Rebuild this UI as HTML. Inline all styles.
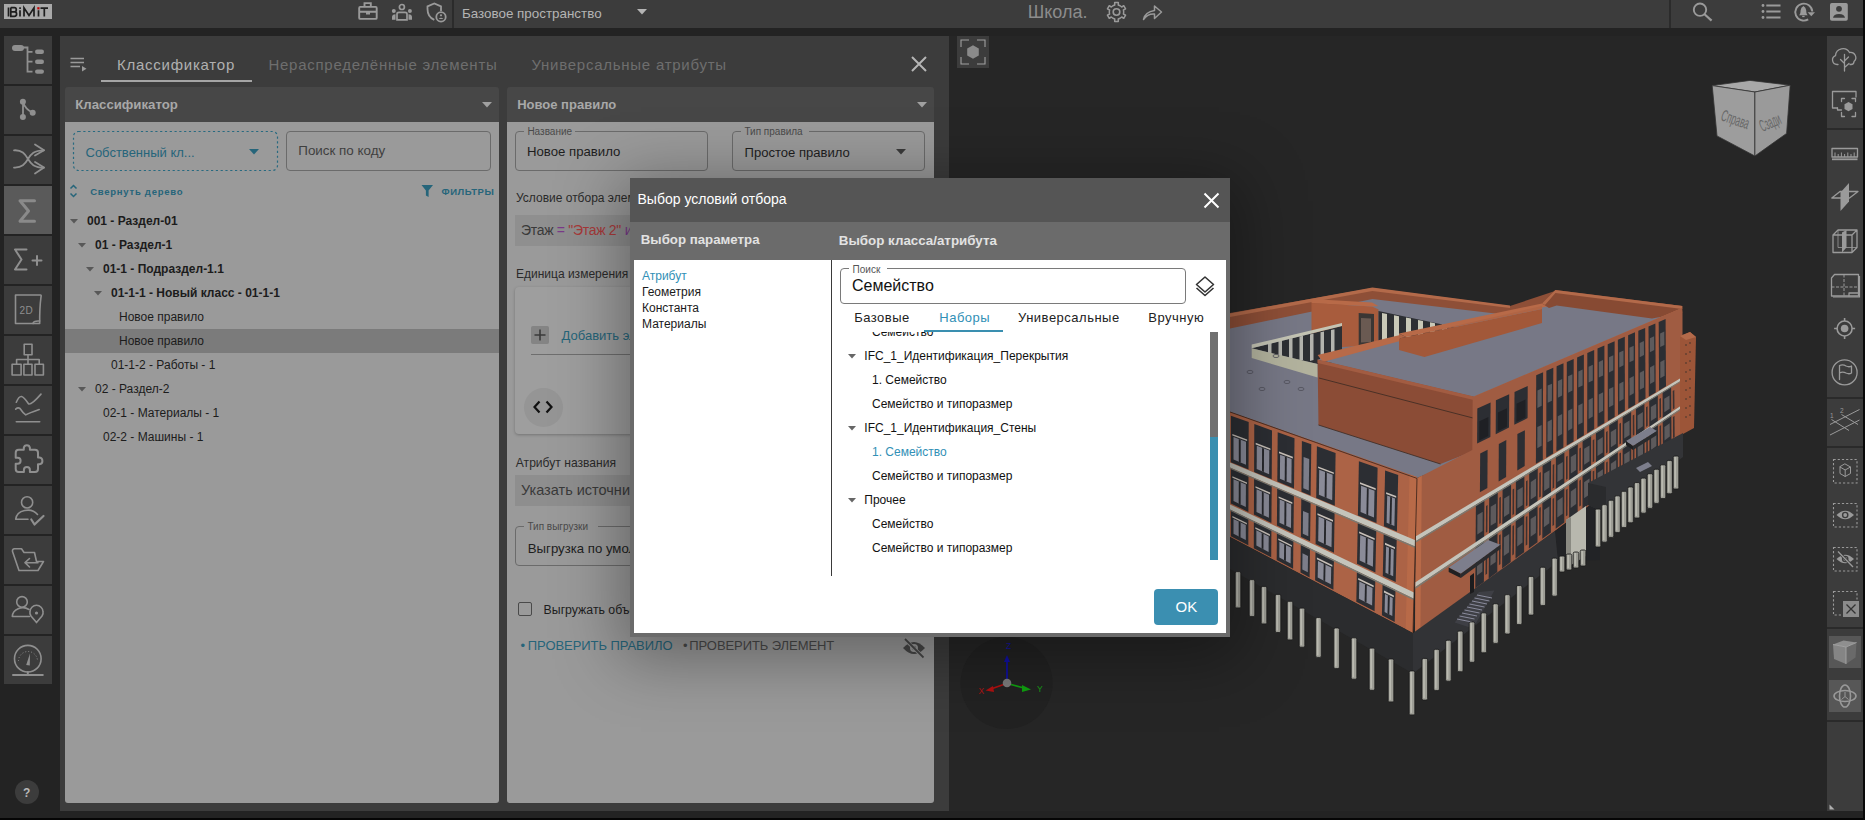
<!DOCTYPE html>
<html><head><meta charset="utf-8"><style>
html,body{margin:0;padding:0;width:1865px;height:820px;overflow:hidden;background:#232323;font-family:"Liberation Sans", sans-serif;}
.t{position:absolute;white-space:nowrap;line-height:1;font-family:"Liberation Sans", sans-serif;}
</style></head><body>
<div style="position:absolute;left:0px;top:0px;width:1865px;height:28px;background:#3c3c3c;"></div><div style="position:absolute;left:452px;top:0px;width:2px;height:28px;background:#2b2b2b;"></div><div style="position:absolute;left:1669px;top:0px;width:2px;height:28px;background:#2b2b2b;"></div><svg style="position:absolute;left:4px;top:4px;" width="48" height="15" viewBox="0 0 48 15"><rect width="48" height="15" fill="#a9a9a9"/><path d="M4.5 3.6V12.4M6.8 3.6H10.5Q12.3 3.6 12.3 5.7Q12.3 7.8 10.3 7.9H7.5H10.6Q12.6 8 12.6 10.1Q12.6 12.4 10.4 12.4H6.8V3.6" stroke="#1e1e1e" stroke-width="1.7" fill="none"/><path d="M16 6.2V12.4M20 12.4V3.8L25 11.5L30 3.8V12.4M34.5 6.2V12.4M36.5 4.2H44M40.3 4.2V12.4" stroke="#1e1e1e" stroke-width="1.7" fill="none"/><rect x="15.2" y="3.3" width="1.7" height="1.7" fill="#1e1e1e"/><rect x="33.3" y="3.2" width="2.2" height="2.2" fill="#c00000"/></svg><svg style="position:absolute;left:356px;top:0px;" width="24" height="24" viewBox="0 0 24 24"><rect x="3.2" y="6.9" width="17.5" height="12" rx="1" stroke="#9a9a9a" stroke-width="1.9" fill="none"/><path d="M8.5 6.9V3.1H14.8V6.9M3.2 11.7H20.7" stroke="#9a9a9a" stroke-width="1.9" fill="none"/><rect x="10" y="11" width="4" height="3.5" fill="#9a9a9a"/></svg><svg style="position:absolute;left:390px;top:0px;" width="24" height="24" viewBox="0 0 24 24"><circle cx="11.9" cy="7" r="2.5" stroke="#9a9a9a" stroke-width="1.7" fill="none"/><circle cx="3.8" cy="11" r="2" fill="#9a9a9a"/><circle cx="19.9" cy="11" r="2" fill="#9a9a9a"/><path d="M7 19.8V14Q7 12.4 9 12.4H15Q17 12.4 17 14V19.8Z" stroke="#9a9a9a" stroke-width="1.7" fill="none"/><path d="M2 19.8V17Q2 14.5 5.5 14.2V19.8Z M22 19.8V17Q22 14.5 18.5 14.2V19.8Z" fill="#9a9a9a"/></svg><svg style="position:absolute;left:425px;top:0px;" width="24" height="24" viewBox="0 0 24 24"><path d="M9.3 19.9Q2.5 17 2.5 9V6.4L9.3 3.4L16 6.4V11" stroke="#9a9a9a" stroke-width="1.8" fill="none"/><circle cx="16" cy="16.9" r="4.7" stroke="#9a9a9a" stroke-width="1.8" fill="none"/><circle cx="16" cy="15.3" r="1.1" fill="#9a9a9a"/><path d="M13.6 19Q16 16.4 18.4 19Z" fill="#9a9a9a"/></svg><div class="t" style="left:462px;top:6.86px;font-size:13.4px;color:#b4b4b4;font-weight:400;letter-spacing:0px;">Базовое пространство</div><svg style="position:absolute;left:637px;top:9px;" width="10" height="6.5" viewBox="0 0 10 6.5"><path d="M0 0H10L5.0 5.5Z" fill="#b4b4b4"/></svg><div class="t" style="left:1027.7px;top:2.96px;font-size:18px;color:#8c8c8c;font-weight:400;letter-spacing:0px;">Школа.</div><svg style="position:absolute;left:1104px;top:0px;" width="26" height="24" viewBox="0 0 26 24"><path d="M8.91 5.76L10.76 5.01L10.67 2.58L14.33 2.58L14.24 5.01L16.11 5.77L17.68 7.00L19.75 5.70L21.58 8.87L19.42 10.02L19.70 12.01L19.42 13.98L21.58 15.13L19.75 18.30L17.68 17.00L16.09 18.24L14.24 18.99L14.33 21.42L10.67 21.42L10.76 18.99L8.89 18.23L7.32 17.00L5.25 18.30L3.42 15.13L5.58 13.98L5.30 11.99L5.58 10.02L3.42 8.87L5.25 5.70L7.32 7.00Z" stroke="#9a9a9a" stroke-width="1.5" fill="none" stroke-linejoin="round"/><circle cx="12.5" cy="12" r="3.3" stroke="#9a9a9a" stroke-width="1.6" fill="none"/></svg><svg style="position:absolute;left:1140px;top:0px;" width="24" height="24" viewBox="0 0 24 24"><path d="M3.5 19.5Q5 12 14.5 10.5V6L21.5 12L14.5 18.5V14Q7.5 13.5 3.5 19.5Z" stroke="#9a9a9a" stroke-width="1.5" fill="none" stroke-linejoin="round"/></svg><svg style="position:absolute;left:1690px;top:0px;" width="26" height="24" viewBox="0 0 26 24"><circle cx="10" cy="9.7" r="6.2" stroke="#9a9a9a" stroke-width="1.9" fill="none"/><path d="M14.5 14.2L21.6 20.6" stroke="#9a9a9a" stroke-width="2.2"/></svg><svg style="position:absolute;left:1760px;top:0px;" width="24" height="24" viewBox="0 0 24 24"><circle cx="3" cy="5.5" r="1.4" fill="#9a9a9a"/><circle cx="3" cy="11.5" r="1.4" fill="#9a9a9a"/><circle cx="3" cy="17.5" r="1.4" fill="#9a9a9a"/><path d="M6.3 5.5H20.5M6.3 11.5H20.5M6.3 17.5H20.5" stroke="#9a9a9a" stroke-width="2"/></svg><svg style="position:absolute;left:1793px;top:0px;" width="24" height="24" viewBox="0 0 24 24"><path d="M19.3 11.5A8.5 8.5 0 1 0 15.2 19.4" stroke="#9a9a9a" stroke-width="1.9" fill="none"/><path d="M14.6 12.3H22L18.3 16.3Z" fill="#9a9a9a"/><path d="M6 15.2Q7.6 14.2 7.6 10.2Q7.9 7.2 10.4 6Q12.9 7.2 13.2 10.2Q13.2 14.2 14.8 15.2Z" fill="#9a9a9a"/><rect x="9.2" y="15.8" width="2.4" height="1.3" fill="#9a9a9a"/></svg><svg style="position:absolute;left:1829px;top:2px;" width="20" height="20" viewBox="0 0 20 20"><rect x="1" y="1" width="17.8" height="17.8" rx="1.8" fill="#9a9a9a"/><circle cx="10" cy="6.8" r="2.9" fill="#3c3c3c"/><path d="M4 15.8Q4.5 12 10 11.9Q15.5 12 16 15.8Z" fill="#3c3c3c"/></svg><div style="position:absolute;left:4px;top:36px;width:48px;height:48px;background:#3c3c3c;"></div><svg style="position:absolute;left:4px;top:36px;" width="48" height="48" viewBox="0 0 48 48"><rect x="8" y="9" width="12" height="6" rx="3" fill="#8f8f8f"/><path d="M19 11.5H23.5V36.5M23.5 15.8H28.5M23.5 25.7H28.5M23.5 35.6H28.5" stroke="#8f8f8f" stroke-width="1.8" fill="none"/><rect x="31" y="13.6" width="9" height="4.4" rx="2.2" fill="#8f8f8f"/><rect x="31" y="23.5" width="9" height="4.4" rx="2.2" fill="#8f8f8f"/><rect x="31" y="33.4" width="9" height="4.4" rx="2.2" fill="#8f8f8f"/></svg><div style="position:absolute;left:4px;top:86px;width:48px;height:48px;background:#3c3c3c;"></div><svg style="position:absolute;left:4px;top:86px;" width="48" height="48" viewBox="0 0 48 48"><path d="M19 15.7V31M19 15.7Q21 23 28.7 26.7" stroke="#8f8f8f" fill="none" stroke-linecap="round" stroke-linejoin="round" stroke-width="1.8"/><circle cx="18.9" cy="15.7" r="3" fill="#8f8f8f"/><circle cx="18.9" cy="31" r="3" fill="#8f8f8f"/><circle cx="28.7" cy="26.7" r="3" fill="#8f8f8f"/></svg><div style="position:absolute;left:4px;top:136px;width:48px;height:48px;background:#3c3c3c;"></div><svg style="position:absolute;left:4px;top:136px;" width="48" height="48" viewBox="0 0 48 48"><path d="M10 14.3C18 13.8 21 18 24 23C27 28 30 31.6 40 31.6M10 31.6C18 32 21 28 24 23C27 18 30 14.3 40 14.3" stroke="#8f8f8f" fill="none" stroke-linecap="round" stroke-linejoin="round" stroke-width="1.8"/><path d="M31 8.5L40 14.3L31 19.5M31 26L40 31.6L31 37.5" stroke="#8f8f8f" fill="none" stroke-linecap="round" stroke-linejoin="round" stroke-width="1.8"/></svg><div style="position:absolute;left:4px;top:186px;width:48px;height:48px;background:#5a5a5a;"></div><svg style="position:absolute;left:4px;top:186px;" width="48" height="48" viewBox="0 0 48 48"><path d="M16 14.8H30.5M16 14.8L24.5 25L16 35.3H30.5" stroke="#8a8a8a" fill="none" stroke-linecap="round" stroke-linejoin="round" stroke-width="3"/></svg><div style="position:absolute;left:4px;top:236px;width:48px;height:48px;background:#3c3c3c;"></div><svg style="position:absolute;left:4px;top:236px;" width="48" height="48" viewBox="0 0 48 48"><path d="M11 13.5H22.5M11 13.5L17.5 23.5L11 33.5H22.5M28.5 24.5H37.5M33 20V29" stroke="#8f8f8f" fill="none" stroke-linecap="round" stroke-linejoin="round" stroke-width="2"/></svg><div style="position:absolute;left:4px;top:286px;width:48px;height:48px;background:#3c3c3c;"></div><svg style="position:absolute;left:4px;top:286px;" width="48" height="48" viewBox="0 0 48 48"><path d="M11.5 9H36.5Q37.5 9 37 11Q35.5 22 35.7 37.5H11.5Z" stroke="#8f8f8f" fill="none" stroke-linecap="round" stroke-linejoin="round" stroke-width="1.6"/><path d="M29 37.5Q29.5 34.5 35.7 35" stroke="#8f8f8f" fill="none" stroke-linecap="round" stroke-linejoin="round" stroke-width="1.6"/><text x="15.5" y="27.5" font-family="Liberation Sans" font-size="10" fill="#8f8f8f" letter-spacing="0.5">2D</text></svg><div style="position:absolute;left:4px;top:336px;width:48px;height:48px;background:#3c3c3c;"></div><svg style="position:absolute;left:4px;top:336px;" width="48" height="48" viewBox="0 0 48 48"><rect x="20.2" y="8.3" width="7.8" height="10.5" stroke="#8f8f8f" fill="none" stroke-linecap="round" stroke-linejoin="round" stroke-width="1.6"/><path d="M24 18.8V23.5M12.6 28.2V23.5H35.2V28.2M24 23.5V28.2" stroke="#8f8f8f" fill="none" stroke-linecap="round" stroke-linejoin="round" stroke-width="1.6"/><rect x="8.1" y="28.2" width="9" height="10.8" stroke="#8f8f8f" fill="none" stroke-linecap="round" stroke-linejoin="round" stroke-width="1.6"/><rect x="19.9" y="28.2" width="8.1" height="10.8" stroke="#8f8f8f" fill="none" stroke-linecap="round" stroke-linejoin="round" stroke-width="1.6"/><rect x="31" y="28.2" width="8.4" height="10.8" stroke="#8f8f8f" fill="none" stroke-linecap="round" stroke-linejoin="round" stroke-width="1.6"/></svg><div style="position:absolute;left:4px;top:386px;width:48px;height:48px;background:#3c3c3c;"></div><svg style="position:absolute;left:4px;top:386px;" width="48" height="48" viewBox="0 0 48 48"><path d="M12.3 16.2Q15 10 17.5 10.5Q20 11 24.5 17.8Q27 19.5 37 8.1" stroke="#8f8f8f" fill="none" stroke-linecap="round" stroke-linejoin="round" stroke-width="1.6"/><path d="M11.7 23.1Q14 21 16 22.5Q19 27 21.7 28.9Q25 27 35.2 23.5" stroke="#8f8f8f" fill="none" stroke-linecap="round" stroke-linejoin="round" stroke-width="1.6"/><path d="M12.3 35.7H35.7" stroke="#8f8f8f" fill="none" stroke-linecap="round" stroke-linejoin="round" stroke-width="1.6"/></svg><div style="position:absolute;left:4px;top:436px;width:48px;height:48px;background:#3c3c3c;"></div><svg style="position:absolute;left:4px;top:436px;" width="48" height="48" viewBox="0 0 48 48"><path d="M14.7 13.8H19.8V11.7A3.1 3.1 0 0 1 25.9 11.7V13.8H31A3 3 0 0 1 34 16.8V21.6H35.6A3.4 3.4 0 0 1 35.6 28.3H34V33A3 3 0 0 1 31 36H25.9V34A3 3 0 0 0 19.9 34V36H14.7A3 3 0 0 1 11.7 33V27.8H13.6A3 3 0 0 0 13.6 21.8H11.7V16.8A3 3 0 0 1 14.7 13.8Z" stroke="#8f8f8f" fill="none" stroke-linecap="round" stroke-linejoin="round" stroke-width="2"/></svg><div style="position:absolute;left:4px;top:486px;width:48px;height:48px;background:#3c3c3c;"></div><svg style="position:absolute;left:4px;top:486px;" width="48" height="48" viewBox="0 0 48 48"><circle cx="23.1" cy="16.4" r="5.6" stroke="#8f8f8f" fill="none" stroke-linecap="round" stroke-linejoin="round" stroke-width="1.6"/><path d="M11.7 33.2A12 10 0 0 1 33.5 28.5M11.7 33.2H24" stroke="#8f8f8f" fill="none" stroke-linecap="round" stroke-linejoin="round" stroke-width="1.6"/><path d="M27.3 33.5L30.5 38.5L39.5 30" stroke="#8f8f8f" fill="none" stroke-linecap="round" stroke-linejoin="round" stroke-width="2.2"/></svg><div style="position:absolute;left:4px;top:536px;width:48px;height:48px;background:#3c3c3c;"></div><svg style="position:absolute;left:4px;top:536px;" width="48" height="48" viewBox="0 0 48 48"><path d="M15 34.5L8.5 15.5Q8.2 12.8 10.5 12.8H17.5L20 16.5H30.5L32.5 25.5H39.5L34 34.5Z" stroke="#8f8f8f" fill="none" stroke-linecap="round" stroke-linejoin="round" stroke-width="1.6"/><path d="M34 26.7H21.5M25.5 22.5L21 26.7L25.5 31" stroke="#8f8f8f" fill="none" stroke-linecap="round" stroke-linejoin="round" stroke-width="1.6"/></svg><div style="position:absolute;left:4px;top:586px;width:48px;height:48px;background:#3c3c3c;"></div><svg style="position:absolute;left:4px;top:586px;" width="48" height="48" viewBox="0 0 48 48"><circle cx="18" cy="15.9" r="5.3" stroke="#8f8f8f" fill="none" stroke-linecap="round" stroke-linejoin="round" stroke-width="1.6"/><path d="M8.3 30.5A10.5 9 0 0 1 25 23.5M8.3 30.5H25.5" stroke="#8f8f8f" fill="none" stroke-linecap="round" stroke-linejoin="round" stroke-width="1.6"/><path d="M32.5 36.6L27 30Q25.5 27.5 26 25.8A6.5 6.5 0 0 1 39 25.8Q39.5 27.5 38 30Z" stroke="#8f8f8f" fill="none" stroke-linecap="round" stroke-linejoin="round" stroke-width="1.6"/><circle cx="32.5" cy="27" r="1.6" fill="#8f8f8f"/></svg><div style="position:absolute;left:4px;top:636px;width:48px;height:48px;background:#3c3c3c;"></div><svg style="position:absolute;left:4px;top:636px;" width="48" height="48" viewBox="0 0 48 48"><circle cx="23.8" cy="22.7" r="13.3" stroke="#8f8f8f" fill="none" stroke-linecap="round" stroke-linejoin="round" stroke-width="1.6"/><path d="M14.5 25A9.5 9.5 0 0 1 33.5 25" stroke="#8f8f8f" stroke-width="1" stroke-dasharray="1 2" fill="none"/><path d="M22.2 29L26 17.5L25.8 29.5Z" fill="#8f8f8f"/><path d="M23.8 36V39M9 39H38.8" stroke="#8f8f8f" fill="none" stroke-linecap="round" stroke-linejoin="round" stroke-width="2"/></svg><div style="position:absolute;left:15px;top:780px;width:24px;height:24px;border-radius:50%;background:#3c3c3c"></div><div class="t" style="left:23px;top:786.84px;font-size:12px;color:#b8b8b8;font-weight:700;letter-spacing:0px;">?</div><div style="position:absolute;left:60px;top:36px;width:889px;height:775px;background:#3c3c3c;"></div><svg style="position:absolute;left:68px;top:54px;" width="22" height="20" viewBox="0 0 22 20"><path d="M2.5 4.5H16M2.5 8.5H16M2.5 12.5H12" stroke="#9a9a9a" stroke-width="1.7"/><path d="M14 12L18.5 14.8L14 17.6Z" fill="#9a9a9a"/></svg><div class="t" style="left:117px;top:57.10px;font-size:15px;color:#b0b0b0;font-weight:400;letter-spacing:0.75px;">Классификатор</div><div class="t" style="left:268.4px;top:57.10px;font-size:15px;color:#6e6e6e;font-weight:400;letter-spacing:0.75px;">Нераспределённые элементы</div><div class="t" style="left:531.4px;top:57.10px;font-size:15px;color:#6e6e6e;font-weight:400;letter-spacing:0.75px;">Универсальные атрибуты</div><div style="position:absolute;left:101px;top:80px;width:151px;height:2px;background:#a5a5a5;"></div><svg style="position:absolute;left:909px;top:54px;" width="20" height="20" viewBox="0 0 20 20"><path d="M3 3L17 17M17 3L3 17" stroke="#b5b5b5" stroke-width="2"/></svg><div style="position:absolute;left:65px;top:87px;width:434px;height:35px;background:#474747;border-radius:3px 3px 0 0"></div><div style="position:absolute;left:65px;top:122px;width:434px;height:681px;background:#9a9a9a;border-radius:0 0 3px 3px"></div><div class="t" style="left:75.3px;top:98.33px;font-size:13.2px;color:#a8a8a8;font-weight:700;letter-spacing:0px;">Классификатор</div><svg style="position:absolute;left:482px;top:101.5px;" width="10" height="6.5" viewBox="0 0 10 6.5"><path d="M0 0H10L5.0 5.5Z" fill="#a0a0a0"/></svg><svg style="position:absolute;left:72px;top:130px;" width="207" height="42" viewBox="0 0 207 42"><rect x="1.5" y="1.5" width="204" height="39" rx="5" stroke="#286a80" stroke-width="1.2" stroke-dasharray="2.2 2.6" fill="none"/></svg><div class="t" style="left:85.5px;top:146.30px;font-size:13px;color:#26657a;font-weight:400;letter-spacing:0px;">Собственный кл...</div><svg style="position:absolute;left:249px;top:148.5px;" width="10" height="6.5" viewBox="0 0 10 6.5"><path d="M0 0H10L5.0 5.5Z" fill="#26657a"/></svg><div style="position:absolute;left:286px;top:131px;width:203px;height:38px;border:1px solid #6b6b6b;border-radius:4px"></div><div class="t" style="left:298.3px;top:143.66px;font-size:13.4px;color:#3f3f3f;font-weight:400;letter-spacing:0px;">Поиск по коду</div><svg style="position:absolute;left:67px;top:183px;" width="12" height="16" viewBox="0 0 12 16"><path d="M3.5 5.5L6.5 2.5L9.5 5.5M3.5 10.5L6.5 13.5L9.5 10.5" stroke="#26657a" stroke-width="1.5" fill="none"/></svg><div class="t" style="left:90.2px;top:187.26px;font-size:9.5px;color:#26657a;font-weight:700;letter-spacing:0.75px;">Свернуть дерево</div><svg style="position:absolute;left:421px;top:184px;" width="13" height="14" viewBox="0 0 13 14"><path d="M0.5 1H12L7.6 6.5V13L4.9 11.5V6.5Z" fill="#26657a"/></svg><div class="t" style="left:441.5px;top:187.26px;font-size:9.5px;color:#26657a;font-weight:700;letter-spacing:0.55px;">ФИЛЬТРЫ</div><div style="position:absolute;left:65px;top:329px;width:434px;height:24px;background:#7b7b7b;"></div><div class="t" style="left:87px;top:215.24px;font-size:12px;color:#1c1c1c;font-weight:700;letter-spacing:0px;">001 - Раздел-01</div><svg style="position:absolute;left:69.5px;top:218.9px;" width="8" height="5.5" viewBox="0 0 8 5.5"><path d="M0 0H8L4.0 4.5Z" fill="#585858"/></svg><div class="t" style="left:95px;top:239.24px;font-size:12px;color:#1c1c1c;font-weight:700;letter-spacing:0px;">01 - Раздел-1</div><svg style="position:absolute;left:77.5px;top:242.9px;" width="8" height="5.5" viewBox="0 0 8 5.5"><path d="M0 0H8L4.0 4.5Z" fill="#585858"/></svg><div class="t" style="left:103px;top:263.24px;font-size:12px;color:#1c1c1c;font-weight:700;letter-spacing:0px;">01-1 - Подраздел-1.1</div><svg style="position:absolute;left:85.5px;top:266.9px;" width="8" height="5.5" viewBox="0 0 8 5.5"><path d="M0 0H8L4.0 4.5Z" fill="#585858"/></svg><div class="t" style="left:111px;top:287.24px;font-size:12px;color:#1c1c1c;font-weight:700;letter-spacing:0px;">01-1-1 - Новый класс - 01-1-1</div><svg style="position:absolute;left:93.5px;top:290.9px;" width="8" height="5.5" viewBox="0 0 8 5.5"><path d="M0 0H8L4.0 4.5Z" fill="#585858"/></svg><div class="t" style="left:119px;top:311.24px;font-size:12px;color:#1c1c1c;font-weight:400;letter-spacing:0px;">Новое правило</div><div class="t" style="left:119px;top:335.24px;font-size:12px;color:#1c1c1c;font-weight:400;letter-spacing:0px;">Новое правило</div><div class="t" style="left:111px;top:359.24px;font-size:12px;color:#1c1c1c;font-weight:400;letter-spacing:0px;">01-1-2 - Работы - 1</div><div class="t" style="left:95px;top:383.24px;font-size:12px;color:#1c1c1c;font-weight:400;letter-spacing:0px;">02 - Раздел-2</div><svg style="position:absolute;left:77.5px;top:386.9px;" width="8" height="5.5" viewBox="0 0 8 5.5"><path d="M0 0H8L4.0 4.5Z" fill="#585858"/></svg><div class="t" style="left:103px;top:407.24px;font-size:12px;color:#1c1c1c;font-weight:400;letter-spacing:0px;">02-1 - Материалы - 1</div><div class="t" style="left:103px;top:431.24px;font-size:12px;color:#1c1c1c;font-weight:400;letter-spacing:0px;">02-2 - Машины - 1</div><div style="position:absolute;left:507px;top:87px;width:427px;height:35px;background:#474747;border-radius:3px 3px 0 0"></div><div style="position:absolute;left:507px;top:122px;width:427px;height:681px;background:#9a9a9a;border-radius:0 0 3px 3px"></div><div class="t" style="left:517.2px;top:98.30px;font-size:13px;color:#a8a8a8;font-weight:700;letter-spacing:0px;">Новое правило</div><svg style="position:absolute;left:917px;top:102px;" width="10" height="6.5" viewBox="0 0 10 6.5"><path d="M0 0H10L5.0 5.5Z" fill="#a0a0a0"/></svg><div style="position:absolute;left:515px;top:131px;width:191px;height:38px;border:1px solid #6b6b6b;border-radius:4px"></div><div style="position:absolute;left:524.4px;top:129px;width:50.8px;height:5px;background:#9a9a9a;"></div><div class="t" style="left:527.4px;top:127.04px;font-size:10px;color:#4a4a4a;font-weight:400;letter-spacing:0px;">Название</div><div class="t" style="left:527px;top:144.83px;font-size:13.2px;color:#1e1e1e;font-weight:400;letter-spacing:0px;">Новое правило</div><div style="position:absolute;left:732px;top:131px;width:191px;height:38px;border:1px solid #6b6b6b;border-radius:4px"></div><div style="position:absolute;left:741.4px;top:129px;width:67.6px;height:5px;background:#9a9a9a;"></div><div class="t" style="left:744.4px;top:127.04px;font-size:10px;color:#4a4a4a;font-weight:400;letter-spacing:0px;">Тип правила</div><div class="t" style="left:744.5px;top:146.45px;font-size:13.05px;color:#1e1e1e;font-weight:400;letter-spacing:0px;">Простое правило</div><svg style="position:absolute;left:896px;top:149px;" width="10" height="6.5" viewBox="0 0 10 6.5"><path d="M0 0H10L5.0 5.5Z" fill="#3a3a3a"/></svg><div class="t" style="left:516px;top:192.14px;font-size:12px;color:#2a2a2a;font-weight:400;letter-spacing:0px;">Условие отбора элементов</div><div style="position:absolute;left:515px;top:215px;width:410px;height:31px;background:#8f8f8f;"></div><div class="t" style="left:521px;top:223.0px;font-size:14px;letter-spacing:-0.3px;color:#3a3a3a">Этаж <span style="color:#7a3a8a">=</span> <span style="color:#a83a3a">"Этаж 2"</span> <span style="color:#7a3a8a">и</span></div><div class="t" style="left:516px;top:267.84px;font-size:12px;color:#2a2a2a;font-weight:400;letter-spacing:0px;">Единица измерения</div><div style="position:absolute;left:515px;top:287px;width:410px;height:147px;background:#9e9e9e;border-radius:4px;box-shadow:0 1px 3px rgba(0,0,0,0.25)"></div><div style="position:absolute;left:531px;top:326px;width:18px;height:18px;background:#848484;border-radius:2px"></div><svg style="position:absolute;left:531px;top:326px;" width="18" height="18" viewBox="0 0 18 18"><path d="M9 3.5V14.5M3.5 9H14.5" stroke="#3a3a3a" stroke-width="1.6"/></svg><div class="t" style="left:561.6px;top:328.50px;font-size:13px;color:#26657a;font-weight:400;letter-spacing:0px;">Добавить элемент</div><div style="position:absolute;left:531px;top:354px;width:394px;height:1px;background:#6e6e6e;"></div><div style="position:absolute;left:524px;top:388px;width:39px;height:39px;border-radius:50%;background:#959595"></div><svg style="position:absolute;left:531px;top:396px;" width="24" height="22" viewBox="0 0 24 22"><path d="M8.5 5.5L3.5 11L8.5 16.5M15.5 5.5L20.5 11L15.5 16.5" stroke="#111" stroke-width="2.2" fill="none"/></svg><div class="t" style="left:515.8px;top:456.76px;font-size:12.1px;color:#2a2a2a;font-weight:400;letter-spacing:0px;">Атрибут названия</div><div style="position:absolute;left:515px;top:475px;width:410px;height:31px;background:#8e8e8e;"></div><div class="t" style="left:521px;top:483.33px;font-size:14.5px;color:#3a3a3a;font-weight:400;letter-spacing:0px;">Указать источник</div><div style="position:absolute;left:515px;top:526px;width:408px;height:38px;border:1px solid #6b6b6b;border-radius:4px"></div><div style="position:absolute;left:524.4px;top:524px;width:73.19999999999999px;height:5px;background:#9a9a9a;"></div><div class="t" style="left:527.4px;top:522.04px;font-size:10px;color:#4a4a4a;font-weight:400;letter-spacing:0px;">Тип выгрузки</div><div class="t" style="left:527.8px;top:541.53px;font-size:13.2px;color:#1e1e1e;font-weight:400;letter-spacing:0px;">Выгрузка по умолчанию</div><div style="position:absolute;left:518px;top:602px;width:11.5px;height:11.5px;border:1.8px solid #4a4a4a;border-radius:2px"></div><div class="t" style="left:543.6px;top:603.59px;font-size:12.3px;color:#1e1e1e;font-weight:400;letter-spacing:0px;">Выгружать объекты</div><div class="t" style="left:520.5px;top:639.00px;font-size:13px;color:#26657a;font-weight:400;letter-spacing:0px;">•</div><div class="t" style="left:527.8px;top:639.20px;font-size:13px;color:#26657a;font-weight:400;letter-spacing:-0.06px;">ПРОВЕРИТЬ ПРАВИЛО</div><div class="t" style="left:683px;top:639.00px;font-size:13px;color:#4a4a4a;font-weight:400;letter-spacing:0px;">•</div><div class="t" style="left:689.3px;top:638.80px;font-size:13px;color:#4a4a4a;font-weight:400;letter-spacing:-0.08px;">ПРОВЕРИТЬ ЭЛЕМЕНТ</div><svg style="position:absolute;left:901px;top:636px;" width="26" height="24" viewBox="0 0 26 24"><path d="M2 12Q13 0 24 12Q13 24 2 12Z" fill="#474747"/><circle cx="13" cy="12" r="4" fill="#9a9a9a"/><circle cx="13" cy="12" r="2" fill="#474747"/><path d="M4 3.5L22 21" stroke="#9a9a9a" stroke-width="3.5"/><path d="M4 3L22.5 21.5" stroke="#474747" stroke-width="1.8"/></svg><div style="position:absolute;left:949px;top:36px;width:878px;height:775px;background:#262626;"></div><svg style="position:absolute;left:0;top:0" width="1865" height="820" viewBox="0 0 1865 820"><polygon points="1230.0,313.0 1372.4,288.0 1510.0,306.0 1555.0,291.0 1682.0,306.0 1682.0,320.0 1474.0,400.0 1230.0,330.0" fill="#8e4f37" /><polygon points="1230.0,328.5 1372.4,299.0 1508.0,315.0 1560.0,300.0 1682.0,314.0 1474.0,400.0 1474.0,455.0 1417.0,478.0 1230.0,412.0" fill="#777886" /><polygon points="1230.0,313.5 1372.4,287.5 1510.0,305.5 1510.0,308.0 1372.4,291.0 1230.0,317.0" fill="#b36a4a" /><polygon points="1311.5,303.0 1372.0,306.6 1378.5,309.6 1378.5,344.7 1311.5,349.0" fill="#a85c3d" /><polygon points="1311.5,299.0 1372.0,302.5 1378.5,306.0 1372.0,306.6 1311.5,303.0" fill="#b86a48" /><polygon points="1358.7,313.0 1374.0,314.0 1374.0,344.0 1358.7,345.0" fill="#3a3634" /><polygon points="1361.0,318.0 1371.0,318.5 1371.0,342.0 1361.0,342.5" fill="#6a5a52" /><polygon points="1378.5,311.0 1464.0,329.0 1464.0,345.0 1378.5,344.7" fill="#2d2f33" /><polygon points="1382.0,313.0 1387.0,314.0 1387.0,343.0 1382.0,343.0" fill="#c9c9b8" /><polygon points="1394.0,315.3 1399.0,316.3 1399.0,343.0 1394.0,343.0" fill="#c9c9b8" /><polygon points="1406.0,317.6 1411.0,318.6 1411.0,343.0 1406.0,343.0" fill="#c9c9b8" /><polygon points="1418.0,319.9 1423.0,320.9 1423.0,343.0 1418.0,343.0" fill="#c9c9b8" /><polygon points="1430.0,322.2 1435.0,323.2 1435.0,343.0 1430.0,343.0" fill="#c9c9b8" /><polygon points="1442.0,324.5 1447.0,325.5 1447.0,343.0 1442.0,343.0" fill="#c9c9b8" /><polygon points="1454.0,326.8 1459.0,327.8 1459.0,343.0 1454.0,343.0" fill="#c9c9b8" /><polygon points="1251.7,348.3 1342.0,326.0 1342.0,362.0 1317.6,364.1" fill="#2d2f33" /><polygon points="1268.0,343.2 1271.5,342.4 1271.5,360.0 1268.0,361.0" fill="#b4b4ae" /><polygon points="1278.5,341.0 1282.0,340.2 1282.0,360.0 1278.5,361.0" fill="#b4b4ae" /><polygon points="1289.0,338.8 1292.5,338.0 1292.5,360.0 1289.0,361.0" fill="#b4b4ae" /><polygon points="1299.5,336.6 1303.0,335.8 1303.0,360.0 1299.5,361.0" fill="#b4b4ae" /><polygon points="1310.0,334.4 1313.5,333.6 1313.5,360.0 1310.0,361.0" fill="#b4b4ae" /><polygon points="1320.5,332.2 1324.0,331.4 1324.0,360.0 1320.5,361.0" fill="#b4b4ae" /><polygon points="1331.0,330.0 1334.5,329.2 1334.5,360.0 1331.0,361.0" fill="#b4b4ae" /><polygon points="1251.7,344.5 1342.0,323.0 1342.0,326.0 1251.7,348.3" fill="#c4c4b4" /><polygon points="1251.7,348.3 1317.6,364.1 1317.6,377.6 1251.7,358.0" fill="#b3b39e" /><ellipse cx="1262" cy="389" rx="3" ry="1.6" fill="none" stroke="#50505a" stroke-width="0.8"/><ellipse cx="1287" cy="382" rx="3" ry="1.6" fill="none" stroke="#50505a" stroke-width="0.8"/><ellipse cx="1301" cy="389" rx="3" ry="1.6" fill="none" stroke="#50505a" stroke-width="0.8"/><ellipse cx="1322" cy="397" rx="3" ry="1.6" fill="none" stroke="#50505a" stroke-width="0.8"/><ellipse cx="1338" cy="375" rx="3" ry="1.6" fill="none" stroke="#50505a" stroke-width="0.8"/><ellipse cx="1250" cy="372" rx="3" ry="1.6" fill="none" stroke="#50505a" stroke-width="0.8"/><ellipse cx="1276" cy="356" rx="3" ry="1.6" fill="none" stroke="#50505a" stroke-width="0.8"/><polygon points="1317.6,359.5 1473.7,396.6 1473.7,455.0 1467.8,453.2 1440.5,464.0 1318.5,425.0" fill="#8b4c36" /><polyline points="1319.0,378.0 1473.0,418.0" stroke="#3a2a22" stroke-width="0.8" fill="none"/><polyline points="1318.5,425.0 1440.5,464.0" stroke="#3a2a22" stroke-width="0.8" fill="none"/><polygon points="1317.6,359.5 1400.0,339.5 1541.6,308.0 1555.0,293.0 1682.0,308.0 1473.7,396.6" fill="#777886" /><polygon points="1317.6,355.0 1400.0,335.0 1400.0,341.0 1323.0,362.0" fill="#b86a48" /><polygon points="1317.6,359.5 1473.7,396.6 1473.7,400.0 1317.6,363.0" fill="#a25c42" /><polygon points="1399.0,333.5 1542.0,303.5 1549.0,306.0 1406.0,337.0" fill="#b86a48" /><polygon points="1399.0,338.4 1542.0,309.0 1542.0,323.0 1424.4,357.0 1399.0,350.0" fill="#a25839" /><polygon points="1399.0,333.5 1406.0,337.0 1542.0,306.0 1542.0,309.0 1399.0,338.4" fill="#b06545" /><polygon points="1542.0,303.5 1555.4,290.0 1682.3,306.0 1682.3,313.0 1652.0,318.4 1556.6,305.4 1549.0,308.0" fill="#874a33" /><polygon points="1542.0,303.5 1555.4,290.0 1682.3,306.0 1682.3,309.0 1555.4,293.0 1545.0,305.0" fill="#b36a4a" /><polygon points="1474.0,396.6 1682.0,308.0 1682.0,313.0 1474.0,401.5" fill="#b86a48" /><polygon points="1230.0,411.7 1417.0,477.0 1413.0,633.0 1230.0,537.0" fill="#ac6346" /><polygon points="1230.9,415.8 1248.7,422.1 1248.5,469.6 1230.9,462.2" fill="#2c2e33" /><polygon points="1232.4,434.0 1247.1,439.6 1247.1,441.1 1232.4,435.5" fill="#c8c0b8" /><polygon points="1233.5,436.9 1246.0,441.7 1246.0,464.7 1233.5,459.5" fill="#8a8b98" /><polygon points="1238.8,439.0 1240.7,439.7 1240.7,462.5 1238.8,461.7" fill="#25262a" /><polygon points="1254.3,424.1 1272.0,430.4 1271.7,479.3 1254.1,471.9" fill="#2c2e33" /><polygon points="1255.7,442.8 1270.4,448.4 1270.4,450.0 1255.7,444.4" fill="#c8c0b8" /><polygon points="1256.8,445.8 1269.3,450.6 1269.1,474.2 1256.7,469.1" fill="#8a8b98" /><polygon points="1262.1,447.9 1264.0,448.6 1263.9,472.1 1262.0,471.3" fill="#25262a" /><polygon points="1277.7,432.3 1294.5,438.3 1294.0,488.6 1277.3,481.6" fill="#2c2e33" /><polygon points="1279.0,451.6 1292.8,456.8 1292.8,458.5 1279.0,453.2" fill="#c8c0b8" /><polygon points="1280.1,454.7 1291.6,459.1 1291.4,483.4 1279.9,478.7" fill="#8a8b98" /><polygon points="1284.9,456.6 1286.8,457.3 1286.6,481.4 1284.7,480.7" fill="#25262a" /><polygon points="1301.9,441.0 1311.3,444.3 1310.6,495.6 1301.4,491.7" fill="#2c2e33" /><polygon points="1303.6,456.9 1309.2,459.0 1308.8,490.6 1303.3,488.3" fill="#7d7e8a" /><polygon points="1316.9,446.3 1335.6,452.9 1334.8,505.7 1316.2,497.9" fill="#2c2e33" /><polygon points="1318.1,466.4 1333.8,472.4 1333.8,474.1 1318.1,468.1" fill="#c8c0b8" /><polygon points="1319.2,469.7 1332.6,474.8 1332.2,500.3 1318.9,494.8" fill="#8a8b98" /><polygon points="1325.0,471.9 1326.8,472.6 1326.5,497.9 1324.6,497.2" fill="#25262a" /><polygon points="1358.9,461.2 1377.6,467.8 1376.5,523.1 1357.9,515.4" fill="#2c2e33" /><polygon points="1360.0,482.3 1375.7,488.2 1375.7,490.0 1360.0,484.1" fill="#c8c0b8" /><polygon points="1361.1,485.7 1374.5,490.8 1374.0,517.5 1360.6,512.0" fill="#8a8b98" /><polygon points="1366.9,487.9 1368.7,488.6 1368.2,515.2 1366.4,514.4" fill="#25262a" /><polygon points="1385.1,470.4 1398.2,475.1 1396.9,531.6 1383.9,526.2" fill="#2c2e33" /><polygon points="1386.1,492.2 1396.2,496.0 1396.2,497.8 1386.1,494.0" fill="#c8c0b8" /><polygon points="1387.2,495.6 1395.0,498.6 1394.4,526.0 1386.6,522.8" fill="#8a8b98" /><polygon points="1390.2,496.8 1392.0,497.5 1391.4,524.8 1389.5,524.0" fill="#25262a" /><polygon points="1230.9,468.5 1248.5,476.0 1248.4,511.9 1230.9,503.6" fill="#2c2e33" /><polygon points="1232.4,476.2 1247.0,482.5 1247.0,484.1 1232.4,477.7" fill="#c8c0b8" /><polygon points="1233.5,479.2 1245.9,484.6 1245.8,506.9 1233.5,501.1" fill="#8a8b98" /><polygon points="1238.8,481.5 1240.6,482.3 1240.6,504.4 1238.7,503.5" fill="#25262a" /><polygon points="1254.1,478.4 1271.7,485.9 1271.4,522.9 1253.9,514.6" fill="#2c2e33" /><polygon points="1255.5,486.3 1270.1,492.6 1270.1,494.2 1255.5,487.8" fill="#c8c0b8" /><polygon points="1256.6,489.3 1269.0,494.8 1268.9,517.7 1256.5,511.9" fill="#8a8b98" /><polygon points="1261.9,491.7 1263.7,492.5 1263.6,515.2 1261.8,514.4" fill="#25262a" /><polygon points="1277.2,488.3 1293.9,495.4 1293.5,533.4 1276.9,525.5" fill="#2c2e33" /><polygon points="1278.6,496.4 1292.3,502.3 1292.3,504.0 1278.6,498.0" fill="#c8c0b8" /><polygon points="1279.7,499.5 1291.2,504.6 1291.0,528.1 1279.5,522.8" fill="#8a8b98" /><polygon points="1284.5,501.6 1286.4,502.4 1286.2,525.9 1284.3,525.0" fill="#25262a" /><polygon points="1301.3,498.5 1310.6,502.5 1310.1,541.3 1300.9,536.9" fill="#2c2e33" /><polygon points="1303.0,510.9 1308.6,513.3 1308.3,536.3 1302.8,533.7" fill="#7d7e8a" /><polygon points="1316.1,504.9 1334.6,512.8 1334.0,552.7 1315.6,544.0" fill="#2c2e33" /><polygon points="1317.5,513.3 1333.0,520.1 1333.0,521.8 1317.5,515.0" fill="#c8c0b8" /><polygon points="1318.6,516.6 1331.9,522.5 1331.5,547.2 1318.2,541.0" fill="#8a8b98" /><polygon points="1324.3,519.1 1326.1,520.0 1325.8,544.5 1323.9,543.7" fill="#25262a" /><polygon points="1357.8,522.7 1376.3,530.6 1375.4,572.5 1357.0,563.7" fill="#2c2e33" /><polygon points="1359.1,531.5 1374.7,538.3 1374.6,540.1 1359.1,533.3" fill="#c8c0b8" /><polygon points="1360.2,534.9 1373.5,540.8 1372.9,566.8 1359.7,560.5" fill="#8a8b98" /><polygon points="1365.9,537.5 1367.7,538.3 1367.2,564.1 1365.4,563.2" fill="#25262a" /><polygon points="1383.7,533.8 1396.7,539.3 1395.7,582.1 1382.8,576.0" fill="#2c2e33" /><polygon points="1385.0,542.8 1395.0,547.2 1395.0,549.0 1385.0,544.7" fill="#c8c0b8" /><polygon points="1386.1,546.4 1393.8,549.8 1393.2,576.3 1385.5,572.7" fill="#8a8b98" /><polygon points="1389.0,547.7 1390.9,548.5 1390.3,574.9 1388.4,574.0" fill="#25262a" /><polygon points="1230.9,509.9 1248.4,518.4 1248.3,545.3 1230.9,536.2" fill="#2c2e33" /><polygon points="1232.4,515.9 1246.9,523.0 1246.9,524.6 1232.4,517.4" fill="#c8c0b8" /><polygon points="1233.5,518.9 1245.8,525.0 1245.8,540.1 1233.5,533.8" fill="#8a8b98" /><polygon points="1238.7,521.5 1240.6,522.4 1240.5,537.4 1238.7,536.5" fill="#25262a" /><polygon points="1253.9,521.0 1271.4,529.5 1271.2,557.3 1253.8,548.2" fill="#2c2e33" /><polygon points="1255.4,527.2 1269.9,534.3 1269.9,535.9 1255.3,528.7" fill="#c8c0b8" /><polygon points="1256.4,530.3 1268.7,536.4 1268.6,552.0 1256.4,545.6" fill="#8a8b98" /><polygon points="1261.7,532.9 1263.5,533.8 1263.4,549.3 1261.6,548.3" fill="#25262a" /><polygon points="1276.9,532.2 1293.4,540.2 1293.1,568.8 1276.7,560.1" fill="#2c2e33" /><polygon points="1278.3,538.5 1291.9,545.2 1291.9,546.8 1278.3,540.1" fill="#c8c0b8" /><polygon points="1279.4,541.7 1290.8,547.4 1290.6,563.4 1279.3,557.5" fill="#8a8b98" /><polygon points="1284.2,544.1 1286.0,545.0 1285.9,560.9 1284.0,559.9" fill="#25262a" /><polygon points="1300.8,543.8 1310.0,548.3 1309.6,577.4 1300.5,572.6" fill="#2c2e33" /><polygon points="1302.5,553.3 1308.0,556.1 1307.8,572.3 1302.3,569.4" fill="#7d7e8a" /><polygon points="1315.5,550.9 1333.9,559.9 1333.4,589.8 1315.1,580.2" fill="#2c2e33" /><polygon points="1316.9,557.5 1332.3,565.1 1332.3,566.8 1316.9,559.2" fill="#c8c0b8" /><polygon points="1318.0,560.9 1331.2,567.4 1330.9,584.2 1317.7,577.4" fill="#8a8b98" /><polygon points="1323.7,563.7 1325.5,564.6 1325.2,581.3 1323.4,580.3" fill="#25262a" /><polygon points="1356.9,571.0 1375.3,579.9 1374.6,611.3 1356.3,601.8" fill="#2c2e33" /><polygon points="1358.2,577.9 1373.7,585.5 1373.6,587.3 1358.2,579.7" fill="#c8c0b8" /><polygon points="1359.3,581.4 1372.5,587.9 1372.1,605.5 1358.9,598.7" fill="#8a8b98" /><polygon points="1365.0,584.2 1366.8,585.1 1366.5,602.6 1364.6,601.6" fill="#25262a" /><polygon points="1382.6,583.5 1395.5,589.8 1394.7,621.9 1381.9,615.2" fill="#2c2e33" /><polygon points="1384.0,590.6 1393.9,595.5 1393.8,597.3 1383.9,592.4" fill="#c8c0b8" /><polygon points="1385.0,594.1 1392.7,598.0 1392.3,616.0 1384.6,612.0" fill="#8a8b98" /><polygon points="1387.9,595.6 1389.8,596.5 1389.3,614.4 1387.5,613.5" fill="#25262a" /><polygon points="1409.5,474.4 1417.0,477.0 1413.0,633.0 1405.7,629.2" fill="#b86a48" /><polygon points="1230.0,462.4 1415.4,540.2 1415.2,546.4 1230.0,467.5" fill="#c4c4bb" /><polygon points="1230.0,467.5 1415.2,546.4 1415.2,548.0 1230.0,468.7" fill="#7a7a72" /><polygon points="1230.0,504.4 1414.0,592.4 1413.9,598.7 1230.0,509.4" fill="#c4c4bb" /><polygon points="1230.0,509.4 1413.9,598.7 1413.8,600.2 1230.0,510.7" fill="#7a7a72" /><polygon points="1416.5,478.5 1472.3,449.9 1472.7,397.0 1682.0,308.0 1682.5,313.0 1682.5,436.0 1415.0,635.0" fill="#a05c42" /><polygon points="1477.3,408.6 1490.6,402.6 1490.4,436.9 1477.1,443.6" fill="#2c2e33" /><polygon points="1479.4,421.2 1488.4,416.9 1488.3,436.1 1479.2,440.6" fill="#1f2024" /><polygon points="1480.2,453.6 1487.6,449.7 1487.4,488.0 1479.9,492.3" fill="#2c2e33" /><polygon points="1495.9,400.3 1509.2,394.3 1509.0,427.5 1495.7,434.2" fill="#2c2e33" /><polygon points="1497.9,412.5 1507.0,408.2 1506.9,426.7 1497.8,431.3" fill="#1f2024" /><polygon points="1498.8,443.9 1506.3,440.0 1506.1,477.0 1498.6,481.4" fill="#2c2e33" /><polygon points="1514.5,391.9 1527.7,386.0 1527.6,418.1 1514.3,424.8" fill="#2c2e33" /><polygon points="1516.5,403.7 1525.5,399.5 1525.5,417.4 1516.4,421.9" fill="#1f2024" /><polygon points="1517.4,434.1 1524.9,430.2 1524.7,466.0 1517.3,470.4" fill="#2c2e33" /><polygon points="1536.2,375.2 1543.1,372.2 1542.8,459.7 1535.9,463.8" fill="#2c2e33" /><polygon points="1537.5,390.4 1541.7,388.4 1541.7,405.8 1537.4,407.9" fill="#5d5a5c" /><polygon points="1537.4,427.1 1541.6,424.9 1541.6,445.7 1537.3,448.2" fill="#5d5a5c" /><polygon points="1546.4,370.8 1553.3,367.8 1553.1,453.6 1546.2,457.7" fill="#2c2e33" /><polygon points="1547.7,385.6 1552.0,383.7 1551.9,400.7 1547.7,402.8" fill="#5d5a5c" /><polygon points="1547.6,421.7 1551.9,419.5 1551.8,439.9 1547.5,442.3" fill="#5d5a5c" /><polygon points="1556.6,366.3 1563.5,363.3 1563.4,447.5 1556.4,451.6" fill="#2c2e33" /><polygon points="1557.9,380.9 1562.2,378.9 1562.1,395.6 1557.9,397.8" fill="#5d5a5c" /><polygon points="1557.8,416.3 1562.1,414.0 1562.1,434.1 1557.8,436.5" fill="#5d5a5c" /><polygon points="1566.8,361.9 1573.7,358.9 1573.6,441.4 1566.7,445.5" fill="#2c2e33" /><polygon points="1568.1,376.2 1572.4,374.2 1572.4,390.6 1568.1,392.7" fill="#5d5a5c" /><polygon points="1568.1,410.8 1572.3,408.6 1572.3,428.2 1568.1,430.7" fill="#5d5a5c" /><polygon points="1577.1,357.5 1583.9,354.5 1583.9,435.2 1577.0,439.4" fill="#2c2e33" /><polygon points="1578.4,371.4 1582.6,369.5 1582.6,385.5 1578.3,387.6" fill="#5d5a5c" /><polygon points="1578.3,405.4 1582.6,403.2 1582.6,422.4 1578.3,424.8" fill="#5d5a5c" /><polygon points="1587.3,353.0 1594.2,350.0 1594.2,429.1 1587.2,433.3" fill="#2c2e33" /><polygon points="1588.6,366.7 1592.8,364.7 1592.8,380.4 1588.6,382.6" fill="#5d5a5c" /><polygon points="1588.6,400.0 1592.8,397.7 1592.8,416.6 1588.6,419.0" fill="#5d5a5c" /><polygon points="1597.5,348.6 1604.4,345.6 1604.4,423.0 1597.5,427.1" fill="#2c2e33" /><polygon points="1598.8,362.0 1603.0,360.0 1603.1,375.4 1598.8,377.5" fill="#5d5a5c" /><polygon points="1598.8,394.5 1603.1,392.3 1603.1,410.7 1598.8,413.2" fill="#5d5a5c" /><polygon points="1607.7,344.2 1614.6,341.2 1614.7,416.9 1607.8,421.0" fill="#2c2e33" /><polygon points="1609.0,357.2 1613.3,355.3 1613.3,370.3 1609.0,372.4" fill="#5d5a5c" /><polygon points="1609.0,389.1 1613.3,386.9 1613.3,404.9 1609.1,407.3" fill="#5d5a5c" /><polygon points="1617.9,339.7 1624.8,336.7 1624.9,410.8 1618.0,414.9" fill="#2c2e33" /><polygon points="1619.2,352.5 1623.5,350.5 1623.5,365.2 1619.3,367.4" fill="#5d5a5c" /><polygon points="1619.3,383.7 1623.5,381.4 1623.6,399.1 1619.3,401.5" fill="#5d5a5c" /><polygon points="1628.1,335.3 1635.0,332.3 1635.2,404.7 1628.3,408.8" fill="#2c2e33" /><polygon points="1629.4,347.8 1633.7,345.8 1633.7,360.2 1629.5,362.3" fill="#5d5a5c" /><polygon points="1629.5,378.3 1633.8,376.0 1633.8,393.2 1629.6,395.7" fill="#5d5a5c" /><polygon points="1638.3,330.8 1645.2,327.9 1645.5,398.6 1638.5,402.7" fill="#2c2e33" /><polygon points="1639.7,343.0 1643.9,341.1 1644.0,355.1 1639.7,357.2" fill="#5d5a5c" /><polygon points="1639.8,372.8 1644.0,370.6 1644.1,387.4 1639.8,389.8" fill="#5d5a5c" /><polygon points="1648.5,326.4 1655.4,323.4 1655.7,392.4 1648.8,396.6" fill="#2c2e33" /><polygon points="1649.9,338.3 1654.1,336.3 1654.2,350.0 1649.9,352.2" fill="#5d5a5c" /><polygon points="1650.0,367.4 1654.3,365.1 1654.4,381.6 1650.1,384.0" fill="#5d5a5c" /><polygon points="1658.7,322.0 1665.6,319.0 1666.0,386.3 1659.1,390.5" fill="#2c2e33" /><polygon points="1660.1,333.6 1664.3,331.6 1664.4,345.0 1660.2,347.1" fill="#5d5a5c" /><polygon points="1660.3,362.0 1664.5,359.7 1664.6,375.7 1660.3,378.2" fill="#5d5a5c" /><polygon points="1475.9,504.4 1484.4,499.3 1484.2,537.7 1475.6,543.4" fill="#2c2e33" /><polygon points="1475.6,545.4 1484.2,539.7 1483.9,581.9 1475.3,588.3" fill="#2c2e33" /><polygon points="1477.4,515.1 1482.7,511.8 1482.6,531.1 1477.3,534.6" fill="#5d5a5c" /><polygon points="1477.1,556.0 1482.5,552.3 1482.4,571.6 1477.0,575.4" fill="#5d5a5c" /><polygon points="1486.0,506.0 1487.6,505.0 1487.4,531.8 1485.8,532.8" fill="#3a3030" /><polygon points="1485.7,544.3 1487.3,543.2 1487.1,573.8 1485.5,575.0" fill="#3a3030" /><polygon points="1489.2,496.4 1497.8,491.2 1497.5,528.8 1489.0,534.5" fill="#2c2e33" /><polygon points="1489.0,536.4 1497.5,530.7 1497.3,572.0 1488.7,578.4" fill="#2c2e33" /><polygon points="1490.7,506.8 1496.1,503.5 1496.0,522.4 1490.6,525.8" fill="#5d5a5c" /><polygon points="1490.5,546.8 1495.9,543.1 1495.7,561.9 1490.4,565.8" fill="#5d5a5c" /><polygon points="1499.3,497.8 1500.9,496.8 1500.8,522.9 1499.2,524.0" fill="#3a3030" /><polygon points="1499.1,535.2 1500.7,534.2 1500.5,564.0 1498.9,565.2" fill="#3a3030" /><polygon points="1502.6,488.3 1511.1,483.2 1510.9,519.9 1502.3,525.6" fill="#2c2e33" /><polygon points="1502.3,527.5 1510.9,521.7 1510.7,562.1 1502.1,568.5" fill="#2c2e33" /><polygon points="1504.1,498.5 1509.4,495.2 1509.3,513.6 1504.0,517.1" fill="#5d5a5c" /><polygon points="1503.9,537.5 1509.2,533.9 1509.1,552.3 1503.8,556.1" fill="#5d5a5c" /><polygon points="1512.6,489.5 1514.2,488.6 1514.1,514.1 1512.5,515.2" fill="#3a3030" /><polygon points="1512.5,526.2 1514.1,525.1 1513.9,554.3 1512.3,555.4" fill="#3a3030" /><polygon points="1515.9,480.3 1524.4,475.1 1524.3,511.0 1515.7,516.7" fill="#2c2e33" /><polygon points="1515.7,518.5 1524.3,512.8 1524.1,552.2 1515.5,558.6" fill="#2c2e33" /><polygon points="1517.4,490.2 1522.8,486.9 1522.7,504.9 1517.3,508.4" fill="#5d5a5c" /><polygon points="1517.3,528.3 1522.6,524.6 1522.5,542.6 1517.2,546.5" fill="#5d5a5c" /><polygon points="1526.0,481.3 1527.6,480.3 1527.5,505.3 1525.9,506.3" fill="#3a3030" /><polygon points="1525.8,517.1 1527.4,516.0 1527.3,544.5 1525.7,545.7" fill="#3a3030" /><polygon points="1529.2,472.2 1537.8,467.1 1537.6,502.1 1529.1,507.8" fill="#2c2e33" /><polygon points="1529.1,509.6 1537.6,503.8 1537.5,542.3 1528.9,548.6" fill="#2c2e33" /><polygon points="1530.8,481.9 1536.1,478.6 1536.0,496.1 1530.7,499.6" fill="#5d5a5c" /><polygon points="1530.6,519.1 1536.0,515.4 1535.9,533.0 1530.6,536.8" fill="#5d5a5c" /><polygon points="1539.3,473.1 1540.9,472.1 1540.8,496.5 1539.2,497.5" fill="#3a3030" /><polygon points="1539.2,508.0 1540.8,506.9 1540.7,534.7 1539.1,535.9" fill="#3a3030" /><polygon points="1542.6,464.2 1551.1,459.0 1551.0,493.2 1542.4,498.9" fill="#2c2e33" /><polygon points="1542.4,500.6 1551.0,494.9 1550.9,532.4 1542.3,538.7" fill="#2c2e33" /><polygon points="1544.1,473.6 1549.5,470.3 1549.4,487.4 1544.1,490.9" fill="#5d5a5c" /><polygon points="1544.0,509.9 1549.4,506.2 1549.3,523.3 1543.9,527.2" fill="#5d5a5c" /><polygon points="1552.7,464.9 1554.3,463.9 1554.2,487.6 1552.6,488.7" fill="#3a3030" /><polygon points="1552.6,498.9 1554.2,497.8 1554.1,524.9 1552.5,526.1" fill="#3a3030" /><polygon points="1555.9,456.1 1564.4,451.0 1564.4,484.3 1555.8,490.0" fill="#2c2e33" /><polygon points="1555.8,491.6 1564.4,485.9 1564.3,522.5 1555.7,528.8" fill="#2c2e33" /><polygon points="1557.5,465.3 1562.8,462.0 1562.8,478.6 1557.4,482.1" fill="#5d5a5c" /><polygon points="1557.4,500.7 1562.7,497.0 1562.7,513.7 1557.3,517.5" fill="#5d5a5c" /><polygon points="1566.0,456.7 1567.6,455.7 1567.6,478.8 1566.0,479.9" fill="#3a3030" /><polygon points="1565.9,489.8 1567.6,488.7 1567.5,515.2 1565.9,516.3" fill="#3a3030" /><polygon points="1569.2,448.1 1577.8,442.9 1577.7,475.3 1569.2,481.0" fill="#2c2e33" /><polygon points="1569.2,482.7 1577.7,477.0 1577.7,512.6 1569.1,518.9" fill="#2c2e33" /><polygon points="1570.8,457.0 1576.1,453.7 1576.1,469.9 1570.8,473.4" fill="#5d5a5c" /><polygon points="1570.8,491.5 1576.1,487.8 1576.1,504.0 1570.7,507.9" fill="#5d5a5c" /><polygon points="1579.3,448.4 1580.9,447.5 1580.9,470.0 1579.3,471.0" fill="#3a3030" /><polygon points="1579.3,480.7 1580.9,479.6 1580.9,505.4 1579.3,506.6" fill="#3a3030" /><polygon points="1582.6,440.0 1591.1,434.9 1591.1,466.4 1582.5,472.1" fill="#2c2e33" /><polygon points="1582.5,473.7 1591.1,468.0 1591.1,502.7 1582.5,509.0" fill="#2c2e33" /><polygon points="1584.1,448.7 1589.5,445.4 1589.5,461.2 1584.1,464.7" fill="#5d5a5c" /><polygon points="1584.1,482.3 1589.5,478.6 1589.5,494.4 1584.1,498.2" fill="#5d5a5c" /><polygon points="1592.7,440.2 1594.3,439.2 1594.3,461.2 1592.7,462.2" fill="#3a3030" /><polygon points="1592.7,471.6 1594.3,470.5 1594.3,495.6 1592.7,496.8" fill="#3a3030" /><polygon points="1595.9,432.0 1604.4,426.8 1604.4,457.5 1595.9,463.2" fill="#2c2e33" /><polygon points="1595.9,464.8 1604.4,459.0 1604.5,492.8 1595.9,499.1" fill="#2c2e33" /><polygon points="1597.5,440.4 1602.8,437.0 1602.8,452.4 1597.5,455.9" fill="#5d5a5c" /><polygon points="1597.5,473.0 1602.9,469.3 1602.9,484.7 1597.5,488.6" fill="#5d5a5c" /><polygon points="1606.0,432.0 1607.6,431.0 1607.7,452.3 1606.0,453.4" fill="#3a3030" /><polygon points="1606.1,462.6 1607.7,461.5 1607.7,485.8 1606.1,487.0" fill="#3a3030" /><polygon points="1609.2,424.0 1617.8,418.8 1617.8,448.6 1609.3,454.3" fill="#2c2e33" /><polygon points="1609.3,455.8 1617.8,450.1 1617.9,482.9 1609.3,489.2" fill="#2c2e33" /><polygon points="1610.8,432.1 1616.2,428.7 1616.2,443.7 1610.9,447.2" fill="#5d5a5c" /><polygon points="1610.9,463.8 1616.2,460.1 1616.3,475.1 1610.9,478.9" fill="#5d5a5c" /><polygon points="1619.4,423.8 1621.0,422.8 1621.0,443.5 1619.4,444.6" fill="#3a3030" /><polygon points="1619.4,453.5 1621.0,452.4 1621.1,476.1 1619.5,477.2" fill="#3a3030" /><polygon points="1622.6,415.9 1631.1,410.7 1631.2,439.7 1622.6,445.4" fill="#2c2e33" /><polygon points="1622.6,446.9 1631.2,441.1 1631.3,473.0 1622.7,479.3" fill="#2c2e33" /><polygon points="1624.2,423.8 1629.5,420.4 1629.6,434.9 1624.2,438.4" fill="#5d5a5c" /><polygon points="1624.2,454.6 1629.6,450.9 1629.6,465.4 1624.3,469.3" fill="#5d5a5c" /><polygon points="1632.7,415.6 1634.3,414.6 1634.4,434.7 1632.8,435.7" fill="#3a3030" /><polygon points="1632.8,444.4 1634.4,443.3 1634.5,466.3 1632.9,467.4" fill="#3a3030" /><polygon points="1635.9,407.9 1644.4,402.7 1644.5,430.8 1636.0,436.5" fill="#2c2e33" /><polygon points="1636.0,437.9 1644.5,432.2 1644.7,463.1 1636.1,469.4" fill="#2c2e33" /><polygon points="1637.5,415.4 1642.9,412.1 1642.9,426.2 1637.6,429.7" fill="#5d5a5c" /><polygon points="1637.6,445.4 1643.0,441.7 1643.0,455.8 1637.7,459.6" fill="#5d5a5c" /><polygon points="1646.0,407.3 1647.6,406.3 1647.7,425.8 1646.1,426.9" fill="#3a3030" /><polygon points="1646.2,435.3 1647.8,434.2 1647.9,456.5 1646.3,457.7" fill="#3a3030" /><polygon points="1649.2,399.8 1657.8,394.7 1657.9,421.9 1649.3,427.6" fill="#2c2e33" /><polygon points="1649.4,429.0 1657.9,423.2 1658.1,453.1 1649.5,459.5" fill="#2c2e33" /><polygon points="1650.9,407.1 1656.2,403.8 1656.3,417.5 1650.9,421.0" fill="#5d5a5c" /><polygon points="1651.0,436.2 1656.3,432.5 1656.4,446.1 1651.1,450.0" fill="#5d5a5c" /><polygon points="1659.4,399.1 1661.0,398.1 1661.1,417.0 1659.5,418.1" fill="#3a3030" /><polygon points="1659.5,426.2 1661.1,425.1 1661.3,446.7 1659.7,447.9" fill="#3a3030" /><polygon points="1662.6,391.8 1671.1,386.6 1671.3,412.9 1662.7,418.6" fill="#2c2e33" /><polygon points="1662.7,420.0 1671.3,414.3 1671.5,443.2 1662.9,449.6" fill="#2c2e33" /><polygon points="1664.2,398.8 1669.5,395.5 1669.6,408.7 1664.3,412.2" fill="#5d5a5c" /><polygon points="1664.4,427.0 1669.7,423.3 1669.8,436.5 1664.5,440.4" fill="#5d5a5c" /><polygon points="1672.7,390.9 1674.3,389.9 1674.5,408.2 1672.9,409.3" fill="#3a3030" /><polygon points="1672.9,417.1 1674.5,416.0 1674.7,436.9 1673.0,438.1" fill="#3a3030" /><polygon points="1416.5,478.5 1421.8,475.8 1420.4,631.0 1415.0,635.0" fill="#b86a48" /><polygon points="1415.9,536.2 1682.5,377.0 1682.6,379.8 1415.9,540.9" fill="#c4c4bb" /><polygon points="1415.9,540.9 1682.6,379.8 1682.6,380.8 1415.9,542.6" fill="#7a7a72" /><polygon points="1415.5,582.3 1682.8,404.5 1682.8,407.3 1415.4,587.0" fill="#c4c4bb" /><polygon points="1415.4,587.0 1682.8,407.3 1682.8,408.4 1415.4,588.7" fill="#7a7a72" /><polygon points="1680.0,336.0 1690.0,332.0 1696.0,337.0 1694.0,428.0 1683.0,434.0 1680.0,434.0" fill="#9c5538" /><polygon points="1680.0,336.0 1690.0,332.0 1696.0,337.0 1686.0,340.0" fill="#b36a4a" /><circle cx="1686" cy="345" r="0.7" fill="#2a2a2a"/><circle cx="1690" cy="343" r="0.7" fill="#2a2a2a"/><circle cx="1686" cy="354" r="0.7" fill="#2a2a2a"/><circle cx="1690" cy="352" r="0.7" fill="#2a2a2a"/><circle cx="1686" cy="363" r="0.7" fill="#2a2a2a"/><circle cx="1690" cy="361" r="0.7" fill="#2a2a2a"/><circle cx="1686" cy="372" r="0.7" fill="#2a2a2a"/><circle cx="1690" cy="370" r="0.7" fill="#2a2a2a"/><circle cx="1686" cy="381" r="0.7" fill="#2a2a2a"/><circle cx="1690" cy="379" r="0.7" fill="#2a2a2a"/><circle cx="1686" cy="390" r="0.7" fill="#2a2a2a"/><circle cx="1690" cy="388" r="0.7" fill="#2a2a2a"/><circle cx="1686" cy="399" r="0.7" fill="#2a2a2a"/><circle cx="1690" cy="397" r="0.7" fill="#2a2a2a"/><circle cx="1686" cy="408" r="0.7" fill="#2a2a2a"/><circle cx="1690" cy="406" r="0.7" fill="#2a2a2a"/><circle cx="1686" cy="417" r="0.7" fill="#2a2a2a"/><circle cx="1690" cy="415" r="0.7" fill="#2a2a2a"/><polygon points="1555.0,531.0 1600.0,498.0 1600.0,560.0 1558.0,561.5" fill="#222326" /><polygon points="1566.0,520.0 1586.0,506.0 1586.0,556.0 1566.0,568.0" fill="#b8b8ae" /><polygon points="1566.0,520.0 1571.0,517.0 1571.0,566.0 1566.0,568.0" fill="#8a8a82" /><polygon points="1230.0,537.0 1413.0,633.0 1413.0,673.5 1230.0,569.0" fill="#2b2c2e" /><polygon points="1413.0,633.0 1555.0,531.0 1558.0,561.5 1413.0,673.5" fill="#323336" /><polygon points="1588.0,483.0 1683.0,433.0 1683.0,457.0 1606.0,513.0 1588.0,505.0" fill="#333437" /><polygon points="1588.0,483.0 1606.0,487.0 1606.0,513.0 1588.0,505.0" fill="#2a2b2d" /><polygon points="1454.7,622.4 1479.0,592.0 1494.4,590.4 1473.0,628.5" fill="#3e3f45" /><path d="M1457.0 619.0L1472.0 622.0" stroke="#8a8b9c" stroke-width="1"/><path d="M1459.5 616.0L1474.5 619.0" stroke="#8a8b9c" stroke-width="1"/><path d="M1462.0 613.0L1477.0 616.0" stroke="#8a8b9c" stroke-width="1"/><path d="M1464.5 610.0L1479.5 613.0" stroke="#8a8b9c" stroke-width="1"/><path d="M1467.0 607.0L1482.0 610.0" stroke="#8a8b9c" stroke-width="1"/><path d="M1469.5 604.0L1484.5 607.0" stroke="#8a8b9c" stroke-width="1"/><path d="M1472.0 601.0L1487.0 604.0" stroke="#8a8b9c" stroke-width="1"/><path d="M1474.5 598.0L1489.5 601.0" stroke="#8a8b9c" stroke-width="1"/><path d="M1477.0 595.0L1492.0 598.0" stroke="#8a8b9c" stroke-width="1"/><polygon points="1448.7,567.6 1488.0,540.0 1500.5,544.7 1460.8,573.7" fill="#7d7e8c" /><polygon points="1448.7,567.6 1460.8,573.7 1460.8,578.0 1448.7,572.0" fill="#1f2022" /><polygon points="1460.8,573.7 1500.5,544.7 1500.5,549.0 1460.8,578.0" fill="#2a2b2e" /><polygon points="1470.0,576.0 1474.0,573.0 1474.0,592.0 1470.0,594.0" fill="#1c1c1e" /><polygon points="1626.0,441.0 1650.0,427.0 1657.0,431.0 1633.0,446.0" fill="#7d7e8c" /><polygon points="1626.0,441.0 1633.0,446.0 1633.0,450.0 1626.0,445.0" fill="#1f2022" /><polygon points="1633.0,446.0 1657.0,431.0 1657.0,435.0 1633.0,450.0" fill="#2a2b2e" /><polygon points="1636.0,468.0 1648.0,462.0 1652.0,466.0 1640.0,472.0" fill="#7d7e8c" /><rect x="1235.2" y="571.6" width="5.6" height="36.3" rx="1.5" fill="#9d9d95" stroke="#1a1a1a" stroke-width="0.8"/><rect x="1236.4" y="572.6" width="1.6" height="33.3" fill="#b9b9b0"/><rect x="1249.2" y="579.6" width="5.6" height="37.0" rx="1.5" fill="#9d9d95" stroke="#1a1a1a" stroke-width="0.8"/><rect x="1250.4" y="580.6" width="1.6" height="34.0" fill="#b9b9b0"/><rect x="1261.2" y="586.4" width="5.6" height="37.5" rx="1.5" fill="#9d9d95" stroke="#1a1a1a" stroke-width="0.8"/><rect x="1262.4" y="587.4" width="1.6" height="34.5" fill="#b9b9b0"/><rect x="1275.2" y="594.4" width="5.6" height="38.1" rx="1.5" fill="#9d9d95" stroke="#1a1a1a" stroke-width="0.8"/><rect x="1276.4" y="595.4" width="1.6" height="35.1" fill="#b9b9b0"/><rect x="1287.2" y="601.3" width="5.6" height="38.6" rx="1.5" fill="#9d9d95" stroke="#1a1a1a" stroke-width="0.8"/><rect x="1288.4" y="602.3" width="1.6" height="35.6" fill="#b9b9b0"/><rect x="1299.2" y="608.1" width="5.6" height="39.1" rx="1.5" fill="#9d9d95" stroke="#1a1a1a" stroke-width="0.8"/><rect x="1300.4" y="609.1" width="1.6" height="36.1" fill="#b9b9b0"/><rect x="1315.7" y="617.5" width="5.6" height="39.9" rx="1.5" fill="#9d9d95" stroke="#1a1a1a" stroke-width="0.8"/><rect x="1316.9" y="618.5" width="1.6" height="36.9" fill="#b9b9b0"/><rect x="1333.8" y="627.9" width="5.6" height="40.7" rx="1.5" fill="#9d9d95" stroke="#1a1a1a" stroke-width="0.8"/><rect x="1335.0" y="628.9" width="1.6" height="37.7" fill="#b9b9b0"/><rect x="1351.2" y="637.8" width="5.6" height="41.4" rx="1.5" fill="#9d9d95" stroke="#1a1a1a" stroke-width="0.8"/><rect x="1352.4" y="638.8" width="1.6" height="38.4" fill="#b9b9b0"/><rect x="1369.2" y="648.1" width="5.6" height="42.2" rx="1.5" fill="#9d9d95" stroke="#1a1a1a" stroke-width="0.8"/><rect x="1370.4" y="649.1" width="1.6" height="39.2" fill="#b9b9b0"/><rect x="1388.2" y="658.9" width="5.6" height="43.0" rx="1.5" fill="#9d9d95" stroke="#1a1a1a" stroke-width="0.8"/><rect x="1389.4" y="659.9" width="1.6" height="40.0" fill="#b9b9b0"/><rect x="1409.2" y="670.9" width="5.6" height="44.0" rx="1.5" fill="#9d9d95" stroke="#1a1a1a" stroke-width="0.8"/><rect x="1410.4" y="671.9" width="1.6" height="41.0" fill="#b9b9b0"/><rect x="1422.0" y="658.4" width="5.6" height="41.7" rx="1.5" fill="#9d9d95" stroke="#1a1a1a" stroke-width="0.8"/><rect x="1423.2" y="659.4" width="1.6" height="38.7" fill="#b9b9b0"/><rect x="1433.8" y="649.3" width="5.6" height="41.3" rx="1.5" fill="#9d9d95" stroke="#1a1a1a" stroke-width="0.8"/><rect x="1435.0" y="650.3" width="1.6" height="38.3" fill="#b9b9b0"/><rect x="1445.6" y="640.2" width="5.6" height="41.0" rx="1.5" fill="#9d9d95" stroke="#1a1a1a" stroke-width="0.8"/><rect x="1446.8" y="641.2" width="1.6" height="38.0" fill="#b9b9b0"/><rect x="1457.4" y="631.0" width="5.6" height="40.7" rx="1.5" fill="#9d9d95" stroke="#1a1a1a" stroke-width="0.8"/><rect x="1458.6" y="632.0" width="1.6" height="37.7" fill="#b9b9b0"/><rect x="1469.2" y="621.9" width="5.6" height="40.4" rx="1.5" fill="#9d9d95" stroke="#1a1a1a" stroke-width="0.8"/><rect x="1470.4" y="622.9" width="1.6" height="37.4" fill="#b9b9b0"/><rect x="1481.0" y="612.8" width="5.6" height="40.0" rx="1.5" fill="#9d9d95" stroke="#1a1a1a" stroke-width="0.8"/><rect x="1482.2" y="613.8" width="1.6" height="37.0" fill="#b9b9b0"/><rect x="1492.8" y="603.7" width="5.6" height="39.7" rx="1.5" fill="#9d9d95" stroke="#1a1a1a" stroke-width="0.8"/><rect x="1494.0" y="604.7" width="1.6" height="36.7" fill="#b9b9b0"/><rect x="1504.6" y="594.6" width="5.6" height="39.4" rx="1.5" fill="#9d9d95" stroke="#1a1a1a" stroke-width="0.8"/><rect x="1505.8" y="595.6" width="1.6" height="36.4" fill="#b9b9b0"/><rect x="1516.4" y="585.5" width="5.6" height="39.1" rx="1.5" fill="#9d9d95" stroke="#1a1a1a" stroke-width="0.8"/><rect x="1517.6" y="586.5" width="1.6" height="36.1" fill="#b9b9b0"/><rect x="1528.2" y="576.4" width="5.6" height="38.7" rx="1.5" fill="#9d9d95" stroke="#1a1a1a" stroke-width="0.8"/><rect x="1529.4" y="577.4" width="1.6" height="35.7" fill="#b9b9b0"/><rect x="1540.0" y="567.2" width="5.6" height="38.4" rx="1.5" fill="#9d9d95" stroke="#1a1a1a" stroke-width="0.8"/><rect x="1541.2" y="568.2" width="1.6" height="35.4" fill="#b9b9b0"/><rect x="1551.8" y="558.1" width="5.6" height="38.1" rx="1.5" fill="#9d9d95" stroke="#1a1a1a" stroke-width="0.8"/><rect x="1553.0" y="559.1" width="1.6" height="35.1" fill="#b9b9b0"/><rect x="1595.2" y="509.0" width="5.6" height="38.0" rx="1.5" fill="#9d9d95" stroke="#1a1a1a" stroke-width="0.8"/><rect x="1596.4" y="510.0" width="1.6" height="35.0" fill="#b9b9b0"/><rect x="1601.7" y="504.6" width="5.6" height="37.6" rx="1.5" fill="#9d9d95" stroke="#1a1a1a" stroke-width="0.8"/><rect x="1602.9" y="505.6" width="1.6" height="34.6" fill="#b9b9b0"/><rect x="1608.2" y="500.2" width="5.6" height="37.2" rx="1.5" fill="#9d9d95" stroke="#1a1a1a" stroke-width="0.8"/><rect x="1609.4" y="501.2" width="1.6" height="34.2" fill="#b9b9b0"/><rect x="1614.7" y="495.8" width="5.6" height="36.8" rx="1.5" fill="#9d9d95" stroke="#1a1a1a" stroke-width="0.8"/><rect x="1615.9" y="496.8" width="1.6" height="33.8" fill="#b9b9b0"/><rect x="1621.2" y="491.3" width="5.6" height="36.3" rx="1.5" fill="#9d9d95" stroke="#1a1a1a" stroke-width="0.8"/><rect x="1622.4" y="492.3" width="1.6" height="33.3" fill="#b9b9b0"/><rect x="1627.7" y="486.9" width="5.6" height="35.9" rx="1.5" fill="#9d9d95" stroke="#1a1a1a" stroke-width="0.8"/><rect x="1628.9" y="487.9" width="1.6" height="32.9" fill="#b9b9b0"/><rect x="1634.2" y="482.5" width="5.6" height="35.5" rx="1.5" fill="#9d9d95" stroke="#1a1a1a" stroke-width="0.8"/><rect x="1635.4" y="483.5" width="1.6" height="32.5" fill="#b9b9b0"/><rect x="1640.7" y="478.1" width="5.6" height="35.1" rx="1.5" fill="#9d9d95" stroke="#1a1a1a" stroke-width="0.8"/><rect x="1641.9" y="479.1" width="1.6" height="32.1" fill="#b9b9b0"/><rect x="1647.2" y="473.7" width="5.6" height="34.7" rx="1.5" fill="#9d9d95" stroke="#1a1a1a" stroke-width="0.8"/><rect x="1648.4" y="474.7" width="1.6" height="31.7" fill="#b9b9b0"/><rect x="1653.7" y="469.2" width="5.6" height="34.2" rx="1.5" fill="#9d9d95" stroke="#1a1a1a" stroke-width="0.8"/><rect x="1654.9" y="470.2" width="1.6" height="31.2" fill="#b9b9b0"/><rect x="1660.2" y="464.8" width="5.6" height="33.8" rx="1.5" fill="#9d9d95" stroke="#1a1a1a" stroke-width="0.8"/><rect x="1661.4" y="465.8" width="1.6" height="30.8" fill="#b9b9b0"/><rect x="1666.7" y="460.4" width="5.6" height="33.4" rx="1.5" fill="#9d9d95" stroke="#1a1a1a" stroke-width="0.8"/><rect x="1667.9" y="461.4" width="1.6" height="30.4" fill="#b9b9b0"/><rect x="1673.2" y="456.0" width="5.6" height="33.0" rx="1.5" fill="#9d9d95" stroke="#1a1a1a" stroke-width="0.8"/><rect x="1674.4" y="457.0" width="1.6" height="30.0" fill="#b9b9b0"/><rect x="1559.2" y="556.0" width="5.6" height="16.0" rx="1.5" fill="#9d9d95" stroke="#1a1a1a" stroke-width="0.8"/><rect x="1560.4" y="557.0" width="1.6" height="13.0" fill="#b9b9b0"/><rect x="1566.2" y="554.0" width="5.6" height="16.0" rx="1.5" fill="#9d9d95" stroke="#1a1a1a" stroke-width="0.8"/><rect x="1567.4" y="555.0" width="1.6" height="13.0" fill="#b9b9b0"/><rect x="1573.2" y="552.0" width="5.6" height="16.0" rx="1.5" fill="#9d9d95" stroke="#1a1a1a" stroke-width="0.8"/><rect x="1574.4" y="553.0" width="1.6" height="13.0" fill="#b9b9b0"/><rect x="1580.2" y="550.0" width="5.6" height="16.0" rx="1.5" fill="#9d9d95" stroke="#1a1a1a" stroke-width="0.8"/><rect x="1581.4" y="551.0" width="1.6" height="13.0" fill="#b9b9b0"/><path d="M1230 412L1417 478.4L1413 633" stroke="#2a1a14" stroke-width="0.7" fill="none"/></svg><div style="position:absolute;left:957px;top:36px;width:32px;height:32px;background:#3c3c3c;"></div><svg style="position:absolute;left:957px;top:36px;" width="32" height="32" viewBox="0 0 32 32"><path d="M4 11V4H12M20 4H28V11M28 21V28H20M12 28H4V21" stroke="#a0a0a0" stroke-width="1.1" fill="none"/><path d="M16 9.2L21.8 12.6V19.4L16 22.8L10.2 19.4V12.6Z" fill="#8a8a8a"/></svg><svg style="position:absolute;left:1705px;top:75px;" width="95" height="90" viewBox="0 0 95 90"><g transform="translate(-1705 -75)"><polygon points="1712.2,85.6 1750,80.4 1790.2,85.2 1754.9,92" fill="#a8a8a8" stroke="#333" stroke-width="0.8"/><polygon points="1712.2,85.6 1754.9,92 1754.9,156 1717,135.9" fill="#9d9d9d" stroke="#333" stroke-width="0.8"/><polygon points="1754.9,92 1790.2,85.2 1786.6,133.4 1754.9,156" fill="#9a9a9a" stroke="#333" stroke-width="0.8"/><text x="0" y="0" font-family="Liberation Sans" font-size="13" fill="#686868" transform="translate(1720 120) rotate(19) scale(0.64 1.25)">Справа</text><text x="0" y="0" font-family="Liberation Sans" font-size="13" fill="#686868" transform="translate(1762.5 132) rotate(-24) scale(0.58 1.3)">Сзади</text></g></svg><svg style="position:absolute;left:955px;top:630px;" width="110" height="110" viewBox="0 0 110 110"><g transform="translate(-955 -630)"><circle cx="1006.6" cy="683" r="46" fill="#222222"/><path d="M1007 683V660" stroke="#1010a0" stroke-width="1.8"/><path d="M1004 662L1007 655L1010 662Z" fill="#1010a0"/><path d="M1005 684L991 689" stroke="#b01010" stroke-width="1.8"/><path d="M993 686L985.5 690.5L994 692Z" fill="#b01010"/><path d="M1009 684L1024 688" stroke="#10a010" stroke-width="1.8"/><path d="M1022 685L1031 689.5L1022 692Z" fill="#10a010"/><circle cx="1007" cy="683" r="4.3" fill="#7a7a7a"/><text x="1006" y="649" font-family="Liberation Sans" font-size="8.5" fill="#1515a0">Z</text><text x="978.5" y="694" font-family="Liberation Sans" font-size="8.5" fill="#b01515">X</text><text x="1037" y="692" font-family="Liberation Sans" font-size="8.5" fill="#15a015">Y</text></g></svg><div style="position:absolute;left:1827px;top:36px;width:36px;height:775px;background:#3c3c3c;"></div><div style="position:absolute;left:1827px;top:127.5px;width:36px;height:2px;background:#2a2a2a;"></div><div style="position:absolute;left:1827px;top:396.5px;width:36px;height:2px;background:#2a2a2a;"></div><div style="position:absolute;left:1827px;top:445.5px;width:36px;height:2px;background:#2a2a2a;"></div><div style="position:absolute;left:1827px;top:626.5px;width:36px;height:2px;background:#2a2a2a;"></div><div style="position:absolute;left:1827px;top:719.5px;width:36px;height:2px;background:#2a2a2a;"></div><svg style="position:absolute;left:1827px;top:44px;" width="36" height="30" viewBox="0 0 36 30"><path d="M11 20.5H10A4.6 4.6 0 0 1 8.5 11.6A7.5 7.5 0 0 1 22.5 8.5A5.2 5.2 0 0 1 27 17.5Q27 20.5 24 20.5H23" stroke="#9a9a9a" fill="none" stroke-linejoin="round" stroke-linecap="round" stroke-width="1.3"/><path d="M17.5 10.5V27M17.5 19.5L13.5 15.5M17.5 17L21.5 13M17.5 23.5L22 19.5" stroke="#9a9a9a" fill="none" stroke-linejoin="round" stroke-linecap="round" stroke-width="1.3"/></svg><svg style="position:absolute;left:1827px;top:88px;" width="36" height="32" viewBox="0 0 36 32"><path d="M10.5 20H5.5V3.5H29V9" stroke="#9a9a9a" fill="none" stroke-linejoin="round" stroke-linecap="round" stroke-width="1.3"/><path d="M10.5 20V22H14.5" stroke="#9a9a9a" fill="none" stroke-linejoin="round" stroke-linecap="round" stroke-width="1.3"/><path d="M14.5 13.5V10.5H17.5M25 10.5H28.5V13.5M28.5 24.5V28.5H25M17.5 28.5H14.5V24.5" stroke="#9a9a9a" fill="none" stroke-linejoin="round" stroke-linecap="round" stroke-width="1.3"/><path d="M21.5 14L25.5 16.3V21L21.5 23.3L17.5 21V16.3Z" fill="#9a9a9a"/></svg><svg style="position:absolute;left:1827px;top:144px;" width="36" height="20" viewBox="0 0 36 20"><rect x="5" y="4.5" width="25.5" height="8.5" stroke="#9a9a9a" fill="none" stroke-linejoin="round" stroke-linecap="round" stroke-width="1.3"/><path d="M5 15.3H30.5" stroke="#9a9a9a" stroke-width="1.8"/><path d="M8.0 13V8.5" stroke="#9a9a9a" stroke-width="1"/><path d="M11.2 13V10" stroke="#9a9a9a" stroke-width="1"/><path d="M14.4 13V8.5" stroke="#9a9a9a" stroke-width="1"/><path d="M17.6 13V10" stroke="#9a9a9a" stroke-width="1"/><path d="M20.8 13V8.5" stroke="#9a9a9a" stroke-width="1"/><path d="M24.0 13V10" stroke="#9a9a9a" stroke-width="1"/><path d="M27.2 13V8.5" stroke="#9a9a9a" stroke-width="1"/><path d="M30.4 13V10" stroke="#9a9a9a" stroke-width="1"/></svg><svg style="position:absolute;left:1827px;top:180px;" width="36" height="34" viewBox="0 0 36 34"><path d="M4.8 18L13 11.5H31L22.5 18Z" stroke="#9a9a9a" fill="none" stroke-linejoin="round" stroke-linecap="round" stroke-width="1.3"/><path d="M13.5 12.5L22 3V21.5L13.5 31Z" fill="#9a9a9a"/></svg><svg style="position:absolute;left:1827px;top:226px;" width="36" height="30" viewBox="0 0 36 30"><path d="M6 9L11 4H30V21.5L25 26.5H6Z M6 9H25V26.5 M25 9L30 4" stroke="#9a9a9a" fill="none" stroke-linejoin="round" stroke-linecap="round" stroke-width="1.3"/><path d="M15 6.5L19.5 4V21.5L15 26.5Z" fill="#9a9a9a"/><path d="M11 4V21.5H30" stroke="#9a9a9a" stroke-width="0.8" fill="none"/></svg><svg style="position:absolute;left:1827px;top:270px;" width="36" height="30" viewBox="0 0 36 30"><path d="M4.5 8L7.5 4.5H31.5V26H4.5Z" stroke="#9a9a9a" fill="none" stroke-linejoin="round" stroke-linecap="round" stroke-width="1.3"/><path d="M4.5 17H31.5M17 4.5V26" stroke="#9a9a9a" stroke-width="1" stroke-dasharray="3 1.5" fill="none"/><path d="M22 26V23H31.5" stroke="#9a9a9a" fill="none" stroke-linejoin="round" stroke-linecap="round" stroke-width="1.3"/><path d="M6 27H32.5V6" stroke="#9a9a9a" stroke-width="1.2" fill="none"/></svg><svg style="position:absolute;left:1827px;top:314px;" width="36" height="30" viewBox="0 0 36 30"><circle cx="17.6" cy="14.5" r="7.5" stroke="#9a9a9a" fill="none" stroke-linejoin="round" stroke-linecap="round" stroke-width="1.6"/><circle cx="17.6" cy="14.5" r="3.8" fill="#9a9a9a"/><path d="M17.6 4V7M17.6 22V25M7.1 14.5H10.1M25.1 14.5H28.1" stroke="#9a9a9a" stroke-width="1.6"/></svg><svg style="position:absolute;left:1827px;top:356px;" width="36" height="34" viewBox="0 0 36 34"><circle cx="17.6" cy="16.4" r="12.5" stroke="#9a9a9a" fill="none" stroke-linejoin="round" stroke-linecap="round" stroke-width="1.3"/><path d="M12.5 23.5V9.5Q16 8 19 10Q22 11.5 24.5 10V17Q22 18.5 19 17Q16 15.3 12.5 16.8" stroke="#9a9a9a" fill="none" stroke-linejoin="round" stroke-linecap="round" stroke-width="1.3"/></svg><svg style="position:absolute;left:1827px;top:408px;" width="36" height="36" viewBox="0 0 36 36"><g stroke="#9a9a9a" stroke-width="1" fill="none"><path d="M3 16.5L32.5 1.5M3 27L32.5 12M4.5 11.5L22 22.5M14.5 6.5L31 16.5"/></g><text x="3" y="10" font-family="Liberation Sans" font-size="6.5" fill="#9a9a9a">1</text><text x="13" y="4.7" font-family="Liberation Sans" font-size="6.5" fill="#9a9a9a">2</text></svg><svg style="position:absolute;left:1827px;top:459px;" width="36" height="25" viewBox="0 0 36 25"><rect x="6.5" y="0.5" width="23.5" height="23.5" stroke="#9a9a9a" stroke-width="1.1" stroke-dasharray="2.2 2" fill="none"/></svg><svg style="position:absolute;left:1827px;top:503px;" width="36" height="25" viewBox="0 0 36 25"><rect x="6.5" y="0.5" width="23.5" height="23.5" stroke="#9a9a9a" stroke-width="1.1" stroke-dasharray="2.2 2" fill="none"/></svg><svg style="position:absolute;left:1827px;top:547px;" width="36" height="25" viewBox="0 0 36 25"><rect x="6.5" y="0.5" width="23.5" height="23.5" stroke="#9a9a9a" stroke-width="1.1" stroke-dasharray="2.2 2" fill="none"/></svg><svg style="position:absolute;left:1827px;top:591px;" width="36" height="25" viewBox="0 0 36 25"><rect x="6.5" y="0.5" width="23.5" height="23.5" stroke="#9a9a9a" stroke-width="1.1" stroke-dasharray="2.2 2" fill="none"/></svg><svg style="position:absolute;left:1827px;top:459px;" width="36" height="25" viewBox="0 0 36 25"><path d="M18.2 5L23.5 8V14.5L18.2 17.5L13 14.5V8Z M13 8L18.2 11L23.5 8M18.2 11V17.5" stroke="#9a9a9a" fill="none" stroke-linejoin="round" stroke-linecap="round" stroke-width="1"/></svg><svg style="position:absolute;left:1827px;top:503px;" width="36" height="25" viewBox="0 0 36 25"><path d="M9.5 12Q18.2 3.5 27 12Q18.2 20.5 9.5 12Z" fill="#9a9a9a"/><circle cx="18.2" cy="12" r="3.3" fill="#3c3c3c"/><circle cx="18.2" cy="12" r="1.9" fill="#9a9a9a"/></svg><svg style="position:absolute;left:1827px;top:547px;" width="36" height="25" viewBox="0 0 36 25"><path d="M9.5 12Q18.2 3.5 27 12Q18.2 20.5 9.5 12Z" fill="#9a9a9a"/><circle cx="18.2" cy="12" r="3.3" fill="#3c3c3c"/><circle cx="18.2" cy="12" r="1.9" fill="#9a9a9a"/><path d="M11 4.5L26 20" stroke="#3c3c3c" stroke-width="3"/><path d="M11 4.5L26 20" stroke="#9a9a9a" stroke-width="1.3"/></svg><div style="position:absolute;left:1843px;top:601px;width:16px;height:16px;background:#8c8c8c;"></div><svg style="position:absolute;left:1843px;top:601px;" width="16" height="16" viewBox="0 0 16 16"><path d="M3.5 3.5L12.5 12.5M12.5 3.5L3.5 12.5" stroke="#333" stroke-width="1.3"/></svg><div style="position:absolute;left:1829px;top:636px;width:32px;height:32px;background:#575757;"></div><svg style="position:absolute;left:1829px;top:636px;" width="32" height="32" viewBox="0 0 32 32"><path d="M4 8.5L14.5 4.5L27.5 6.5L17 11Z" fill="#8f8f8f"/><path d="M4 8.5L17 11V28L5 23Z" fill="#858585"/><path d="M17 11L27.5 6.5L26.5 21.5L17 28Z" fill="#6a6a6a"/><path d="M4 8.5L17 11L27.5 6.5M17 11V28" stroke="#a5a5a5" stroke-width="0.9" fill="none"/></svg><div style="position:absolute;left:1829px;top:680px;width:32px;height:32px;background:#575757;"></div><svg style="position:absolute;left:1829px;top:680px;" width="32" height="32" viewBox="0 0 32 32"><ellipse cx="16" cy="16" rx="11" ry="5.5" stroke="#999" stroke-width="1.6" fill="none"/><ellipse cx="16" cy="16" rx="5.5" ry="11" stroke="#999" stroke-width="1.6" fill="none"/><path d="M16 12V16.5L12.5 19.5M16 16.5L19.5 19.5" stroke="#999" stroke-width="1" fill="none"/></svg><svg style="position:absolute;left:1829px;top:804px;" width="6" height="6" viewBox="0 0 6 6"><path d="M0.5 0.5V5.5H5.5Z" fill="#b0b0b0"/></svg><div style="position:absolute;left:0px;top:818px;width:1865px;height:2px;background:#050505;"></div><div style="position:absolute;left:1863px;top:0px;width:2px;height:820px;background:#080808;"></div><div style="position:absolute;left:630px;top:178px;width:600px;height:459px;background:#6b6b6b;box-shadow:0 12px 60px 10px rgba(0,0,0,0.35)"></div><div style="position:absolute;left:630px;top:178px;width:600px;height:44px;background:#555555;"></div><div style="position:absolute;left:634px;top:260px;width:592px;height:373px;background:#ffffff;"></div><div class="t" style="left:637.5px;top:192.35px;font-size:14px;color:#ffffff;font-weight:400;letter-spacing:0px;">Выбор условий отбора</div><svg style="position:absolute;left:1201px;top:190px;" width="20" height="20" viewBox="0 0 20 20"><path d="M3.5 3.5L17.5 17.5M17.5 3.5L3.5 17.5" stroke="#fff" stroke-width="2"/></svg><div class="t" style="left:640.8px;top:233.49px;font-size:13.25px;color:#e2e2e2;font-weight:700;letter-spacing:0px;">Выбор параметра</div><div class="t" style="left:838.8px;top:233.90px;font-size:13.35px;color:#e2e2e2;font-weight:700;letter-spacing:0px;">Выбор класса/атрибута</div><div style="position:absolute;left:831px;top:260px;width:1px;height:316px;background:#3a3a3a;"></div><div class="t" style="left:642px;top:269.74px;font-size:12px;color:#3190b6;font-weight:400;letter-spacing:0px;">Атрибут</div><div class="t" style="left:642px;top:285.74px;font-size:12px;color:#1a1a1a;font-weight:400;letter-spacing:0px;">Геометрия</div><div class="t" style="left:642px;top:301.74px;font-size:12px;color:#1a1a1a;font-weight:400;letter-spacing:0px;">Константа</div><div class="t" style="left:642px;top:317.74px;font-size:12px;color:#1a1a1a;font-weight:400;letter-spacing:0px;">Материалы</div><div style="position:absolute;left:840px;top:268px;width:344px;height:34px;border:1px solid #7a7a7a;border-radius:4px"></div><div style="position:absolute;left:849px;top:266px;width:38px;height:4px;background:#fff;"></div><div class="t" style="left:852.6px;top:264.54px;font-size:10px;color:#555;font-weight:400;letter-spacing:0px;">Поиск</div><div class="t" style="left:852px;top:277.76px;font-size:16px;color:#111;font-weight:400;letter-spacing:0px;">Семейство</div><svg style="position:absolute;left:1195px;top:275px;" width="20" height="22" viewBox="0 0 20 22"><path d="M10 2L18.5 9.5L10 17L1.5 9.5Z" stroke="#333" stroke-width="1.6" fill="none" stroke-linejoin="round"/><path d="M1.5 13L10 20.5L18.5 13" stroke="#333" stroke-width="1.6" fill="none" stroke-linejoin="round"/></svg><div style="position:absolute;left:834px;top:332px;width:376px;height:244px;overflow:hidden"><div class="t" style="left:38px;top:-6.36px;font-size:12px;color:#111">Семейство</div><div class="t" style="left:30.299999999999955px;top:17.64px;font-size:12px;color:#111">IFC_1_Идентификация_Перекрытия</div><svg style="position:absolute;left:14px;top:21.8px" width="8" height="6"><path d="M0 0H8L4 4.5Z" fill="#666"/></svg><div class="t" style="left:38px;top:41.64px;font-size:12px;color:#111">1. Семейство</div><div class="t" style="left:38px;top:65.64px;font-size:12px;color:#111">Семейство и типоразмер</div><div class="t" style="left:30.299999999999955px;top:89.64px;font-size:12px;color:#111">IFC_1_Идентификация_Стены</div><svg style="position:absolute;left:14px;top:93.8px" width="8" height="6"><path d="M0 0H8L4 4.5Z" fill="#666"/></svg><div class="t" style="left:38px;top:113.64px;font-size:12px;color:#3190b6">1. Семейство</div><div class="t" style="left:38px;top:137.64px;font-size:12px;color:#111">Семейство и типоразмер</div><div class="t" style="left:30.299999999999955px;top:161.64px;font-size:12px;color:#111">Прочее</div><svg style="position:absolute;left:14px;top:165.8px" width="8" height="6"><path d="M0 0H8L4 4.5Z" fill="#666"/></svg><div class="t" style="left:38px;top:185.64px;font-size:12px;color:#111">Семейство</div><div class="t" style="left:38px;top:209.64px;font-size:12px;color:#111">Семейство и типоразмер</div></div><div class="t" style="left:854.2px;top:311.10px;font-size:13px;color:#222;font-weight:400;letter-spacing:0.5px;">Базовые</div><div class="t" style="left:939.3px;top:311.10px;font-size:13px;color:#3190b6;font-weight:400;letter-spacing:0.5px;">Наборы</div><div class="t" style="left:1018px;top:311.10px;font-size:13px;color:#222;font-weight:400;letter-spacing:0.5px;">Универсальные</div><div class="t" style="left:1148.3px;top:311.10px;font-size:13px;color:#222;font-weight:400;letter-spacing:0.5px;">Вручную</div><div style="position:absolute;left:924px;top:330px;width:79px;height:2px;background:#3a8fb0;"></div><div style="position:absolute;left:1210px;top:332px;width:8px;height:105px;background:#707070;"></div><div style="position:absolute;left:1210px;top:437px;width:8px;height:123px;background:#3a8fb0;"></div><div style="position:absolute;left:1154px;top:589px;width:64px;height:36px;background:#3b8fb1;border-radius:4px"></div><div class="t" style="left:1175.5px;top:598.80px;font-size:15px;color:#ffffff;font-weight:400;letter-spacing:0px;">OK</div>
</body></html>
